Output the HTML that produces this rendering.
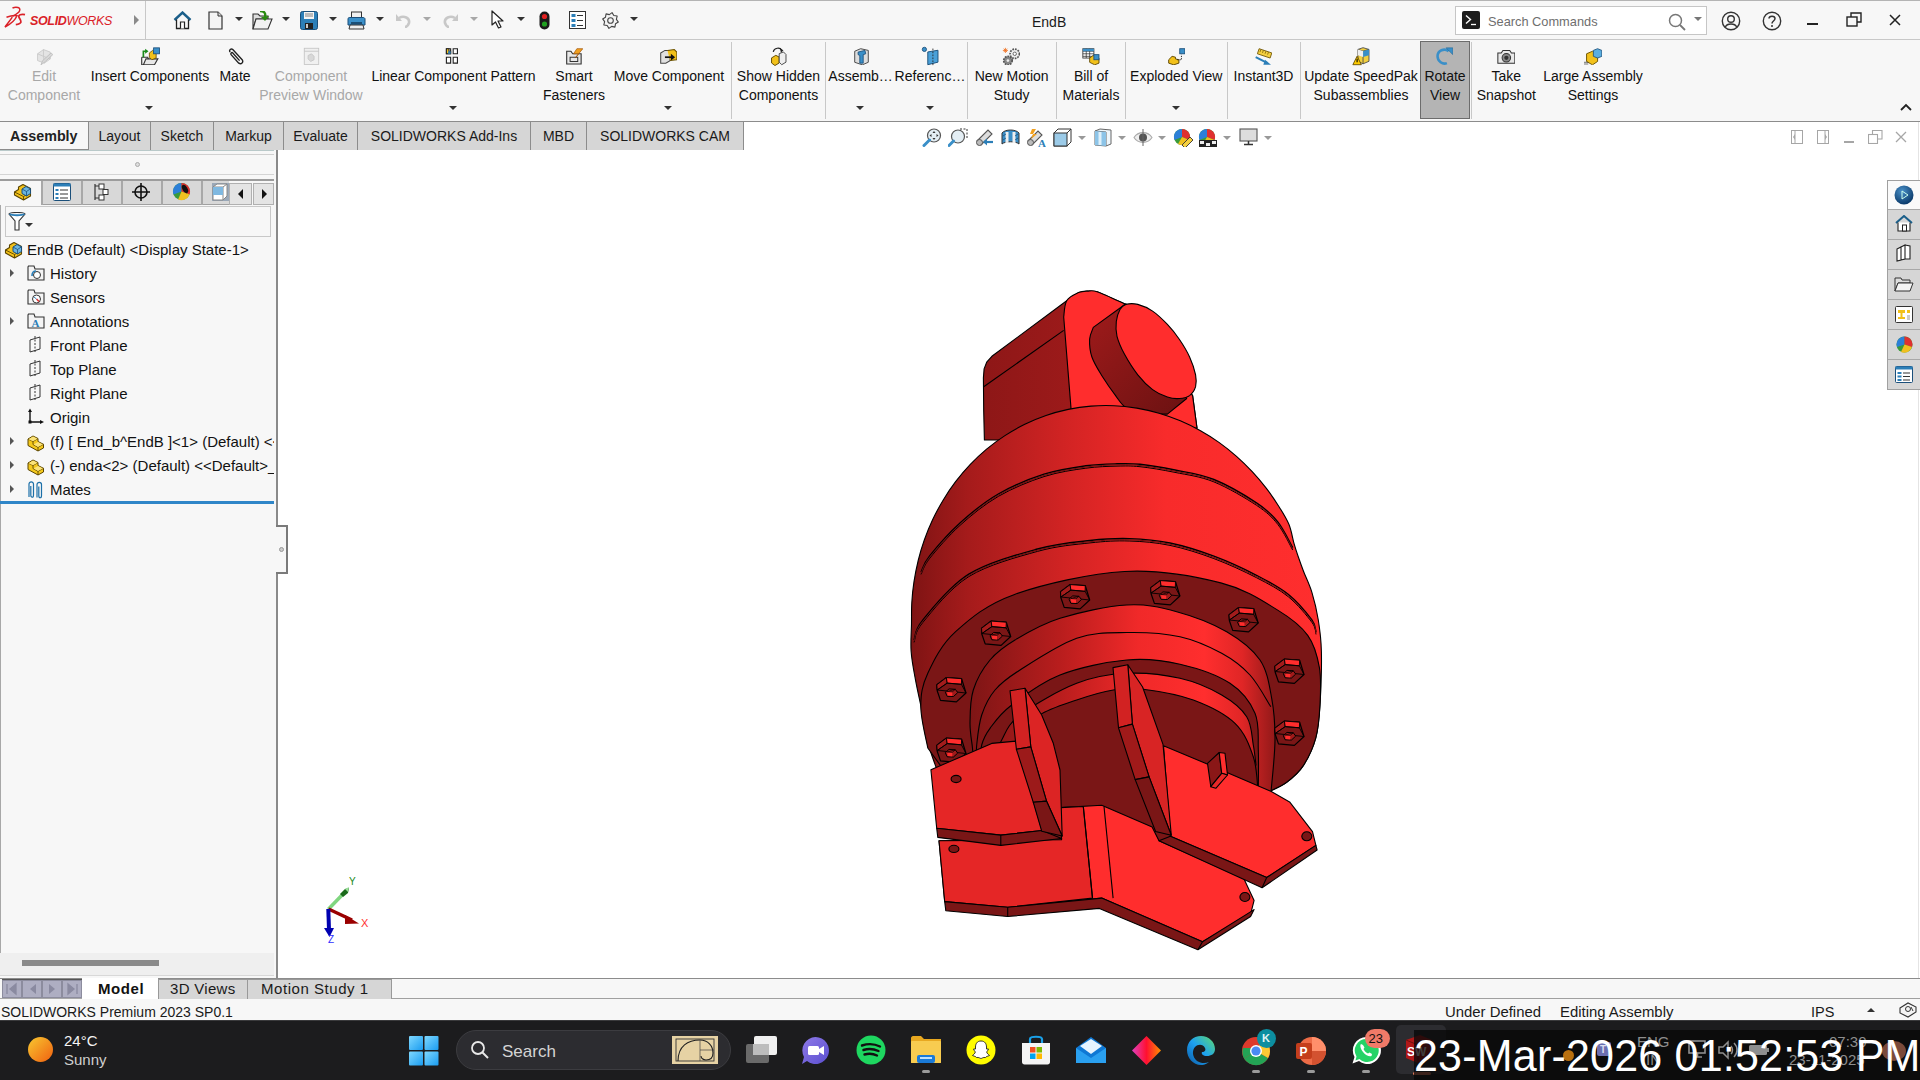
<!DOCTYPE html>
<html><head><meta charset="utf-8">
<style>
*{box-sizing:border-box;margin:0;padding:0}
html,body{width:1920px;height:1080px;overflow:hidden;background:#fff;font-family:"Liberation Sans",sans-serif;font-size:14px;color:#1a1a1a}
.a{position:absolute}
.t{position:absolute;white-space:nowrap;line-height:1}
#title{left:0;top:0;width:1920px;height:40px;background:#f7f7f7;border-top:1px solid #b4b4b4;border-bottom:1px solid #c8c8c8}
#ribbon{left:0;top:40px;width:1920px;height:82px;background:#f7f7f7;border-bottom:1px solid #8c8c8c}
#tabrow{left:0;top:122px;width:744px;height:28px;background:#f7f7f7}
#left{left:0;top:150px;width:278px;height:828px;background:#f7f7f7;border-right:2px solid #8a8a8a;overflow:hidden}
#btabs{left:0;top:978px;width:1920px;height:21px;background:#f7f7f7;border-top:1px solid #8c8c8c;border-bottom:1px solid #a8a8a8}
#status{left:0;top:999px;width:1920px;height:21px;background:#f7f7f7}
#taskbar{left:0;top:1020px;width:1920px;height:60px;background:#1c1c1e}
.rl{position:absolute;text-align:center;line-height:19px;white-space:nowrap;font-size:14px;color:#111}
.gr{color:#a8a8a8}
.sep{position:absolute;top:42px;width:1px;height:77px;background:#c8c8c8}
.dd{position:absolute;width:0;height:0;border-left:4px solid transparent;border-right:4px solid transparent;border-top:4px solid #333}
.tab{position:absolute;top:121px;height:29px;background:#d6d6d6;border:1px solid #8c8c8c;border-bottom:none;font-size:14px;line-height:28px;text-align:center;color:#1a1a1a}
.tree{position:absolute;left:50px;font-size:14px;line-height:1;white-space:nowrap;color:#111}
.exp{position:absolute;width:0;height:0;border-top:4px solid transparent;border-bottom:4px solid transparent;border-left:4px solid #555}
</style></head><body>

<!-- TITLE BAR -->
<div id="title" class="a"></div>
<div class="a" style="left:145px;top:1px;width:1px;height:38px;background:#c8c8c8"></div>
<div class="t" style="left:1032px;top:15px;font-size:14px">EndB</div>
<svg class="a" style="left:0px;top:0px" width="30" height="30" viewBox="0 0 30 30"><path d="M12.5,8 C16,6.3 21,7.3 19.6,10.8 C18.6,13.3 15.5,14.8 12.5,16.3" fill="none" stroke="#da2128" stroke-width="1.5"/><path d="M6.5,17.3 C10.5,15.8 14.5,15.4 17,15.8 C15,20.5 10,24.5 5,27 C8,23 10.5,20 12.3,17.2" fill="none" stroke="#da2128" stroke-width="1.5"/><path d="M25,14.6 C21.5,13.8 17.5,14.8 19.2,17.8 C20.8,20.5 23.5,23.5 15.8,24.6" fill="none" stroke="#da2128" stroke-width="1.8"/></svg>
<div class="t" style="left:30px;top:15px;font-size:12.5px;font-style:italic;color:#da2128;letter-spacing:-0.35px"><b>SOLID</b>WORKS</div>
<div class="a" style="left:134px;top:15px;width:0;height:0;border-top:5px solid transparent;border-bottom:5px solid transparent;border-left:5px solid #8a8a8a"></div>
<svg class="a" style="left:173px;top:11px" width="19" height="19" viewBox="0 0 19 19"><path d="M1.5,9 L9.5,1.5 L17.5,9" fill="none" stroke="#1b5f8a" stroke-width="2.4"/><path d="M3.5,8.5 L3.5,17.5 L15.5,17.5 L15.5,8.5" fill="none" stroke="#222" stroke-width="1.3"/><path d="M7.5,17.5 L7.5,11 L11.5,11 L11.5,17.5" fill="#fff" stroke="#222" stroke-width="1.2"/></svg>
<svg class="a" style="left:208px;top:11px" width="15" height="19" viewBox="0 0 15 19"><path d="M1,1 L10,1 L14,5 L14,18 L1,18Z" fill="#f4f4f4" stroke="#333" stroke-width="1.2"/><path d="M10,1 L10,5 L14,5" fill="#ddd" stroke="#333" stroke-width="1"/></svg>
<svg class="a" style="left:252px;top:11px" width="21" height="19" viewBox="0 0 21 19"><path d="M1,3 L6,3 L8,5 L16,5 L16,8 L4,8 L1,18Z" fill="#ddd" stroke="#333" stroke-width="1.1"/><path d="M1,18 L4,8 L20,8 L16,18Z" fill="#f2f2f2" stroke="#333" stroke-width="1.1"/><path d="M8,0 C12,0 14,2 13,6" fill="none" stroke="#2a8a10" stroke-width="2.4"/><path d="M9,6 L13,10 L17,5Z" fill="#2a8a10"/></svg>
<svg class="a" style="left:300px;top:11px" width="18" height="19" viewBox="0 0 18 19"><rect x="0.5" y="0.5" width="17" height="18" rx="2" fill="#2c7fb8" stroke="#1b4f7a"/><rect x="4" y="1" width="10" height="7" fill="#f4f4f4"/><path d="M5,3 L13,3 M5,5 L13,5" stroke="#666" stroke-width="0.8"/><rect x="5" y="12" width="8" height="6" fill="#222"/><rect x="6" y="13" width="2" height="4" fill="#ccc"/></svg>
<svg class="a" style="left:347px;top:11px" width="19" height="19" viewBox="0 0 19 19"><rect x="4.5" y="1" width="10" height="6" fill="#f0f0f0" stroke="#333"/><path d="M1,8 C1,6.5 2,6.5 3,6.5 L16,6.5 C17,6.5 18,7 18,8 L18,14 L1,14Z" fill="#3a8fc8" stroke="#1b4f7a"/><path d="M4,12 L15,12" stroke="#12395a" stroke-width="1.5"/><path d="M3,14 L16,14 L17,18 L2,18Z" fill="#eee" stroke="#333"/></svg>
<svg class="a" style="left:395px;top:12px" width="17" height="16" viewBox="0 0 17 16"><path d="M4,6 C9,3 15,6 14,11 C13,14 11,15 10,15" fill="none" stroke="#c8c8c8" stroke-width="2.6"/><path d="M1,2 L1,9 L7,9Z" fill="#c8c8c8"/></svg>
<svg class="a" style="left:442px;top:12px" width="17" height="16" viewBox="0 0 17 16"><path d="M13,6 C8,3 2,6 3,11 C4,14 6,15 7,15" fill="none" stroke="#c8c8c8" stroke-width="2.6"/><path d="M16,2 L16,9 L10,9Z" fill="#c8c8c8"/></svg>
<svg class="a" style="left:491px;top:10px" width="13" height="19" viewBox="0 0 13 19"><path d="M1,1 L1,15 L4.5,12 L7.5,18 L10,17 L7,11 L12,11Z" fill="#fff" stroke="#222" stroke-width="1.2" stroke-linejoin="round"/></svg>
<svg class="a" style="left:539px;top:11px" width="11" height="19" viewBox="0 0 11 19"><rect x="0.5" y="0.5" width="10" height="18" rx="5" fill="#1a1a1a"/><circle cx="5.5" cy="5.5" r="2.6" fill="#e02020"/><circle cx="5.5" cy="13" r="2.6" fill="#20a020"/></svg>
<svg class="a" style="left:569px;top:11px" width="17" height="18" viewBox="0 0 17 18"><rect x="0.5" y="0.5" width="16" height="17" fill="#fff" stroke="#333"/><rect x="2.5" y="3" width="4" height="3" fill="#2c7fb8"/><rect x="2.5" y="8" width="4" height="3" fill="#2c7fb8"/><rect x="2.5" y="13" width="4" height="3" fill="#2c7fb8"/><path d="M8,4.5 L14,4.5 M8,9.5 L14,9.5 M8,14.5 L14,14.5" stroke="#333" stroke-width="1"/></svg>
<svg class="a" style="left:602px;top:12px" width="17" height="17" viewBox="0 0 17 17"><polygon points="16.35,10.06 13.49,11.83 12.94,15.15 9.67,14.38 6.94,16.35 5.17,13.49 1.85,12.94 2.62,9.67 0.65,6.94 3.51,5.17 4.06,1.85 7.33,2.62 10.06,0.65 11.83,3.51 15.15,4.06 14.38,7.33" fill="#f4f4f4" stroke="#444" stroke-width="1.1" stroke-linejoin="round"/><circle cx="8.5" cy="8.5" r="2.8" fill="#f4f4f4" stroke="#444" stroke-width="1.1"/></svg>
<div class="dd" style="left:234.5px;top:17px;border-top-color:#333"></div>
<div class="dd" style="left:281.5px;top:17px;border-top-color:#333"></div>
<div class="dd" style="left:328.5px;top:17px;border-top-color:#333"></div>
<div class="dd" style="left:375.5px;top:17px;border-top-color:#333"></div>
<div class="dd" style="left:516.5px;top:17px;border-top-color:#333"></div>
<div class="dd" style="left:629.5px;top:17px;border-top-color:#333"></div>
<div class="dd" style="left:422.5px;top:17px;border-top-color:#a8a8a8"></div>
<div class="dd" style="left:469.5px;top:17px;border-top-color:#a8a8a8"></div>
<div class="a" style="left:1455px;top:6px;width:252px;height:29px;background:#fff;border:1px solid #c6c6c6"></div>
<svg class="a" style="left:1462px;top:11px" width="18" height="18" viewBox="0 0 18 18"><rect x="0" y="0" width="18" height="18" rx="2" fill="#1e1e1e"/><path d="M4,4.5 L8.5,8.5 L4,12.5" fill="none" stroke="#fff" stroke-width="1.4"/><path d="M9,13.5 L14,13.5" stroke="#fff" stroke-width="1.3"/></svg>
<div class="t" style="left:1488px;top:16px;font-size:12.8px;color:#6e6e6e">Search Commands</div>
<svg class="a" style="left:1668px;top:13px" width="19" height="18" viewBox="0 0 19 18"><circle cx="7.5" cy="7.5" r="6" fill="none" stroke="#777" stroke-width="1.5"/><path d="M12,12 L17,17" stroke="#777" stroke-width="1.8"/></svg>
<div class="dd" style="left:1693.5px;top:17px;border-top-color:#777"></div>
<svg class="a" style="left:1721px;top:11px" width="20" height="20" viewBox="0 0 20 20"><circle cx="10" cy="10" r="8.7" fill="none" stroke="#333" stroke-width="1.4"/><circle cx="10" cy="8" r="3.3" fill="none" stroke="#333" stroke-width="1.4"/><path d="M4.3,16 C6,12 14,12 15.7,16" fill="none" stroke="#333" stroke-width="1.4"/></svg>
<svg class="a" style="left:1762px;top:11px" width="20" height="20" viewBox="0 0 20 20"><circle cx="10" cy="10" r="8.7" fill="none" stroke="#333" stroke-width="1.4"/><path d="M7,7.5 C7,4.5 13,4.5 13,7.5 C13,10 10,10 10,12.5" fill="none" stroke="#333" stroke-width="1.5"/><circle cx="10" cy="15" r="1" fill="#333"/></svg>
<div class="a" style="left:1807px;top:23px;width:11px;height:2px;background:#222"></div>
<svg class="a" style="left:1846px;top:12px" width="17" height="15" viewBox="0 0 17 15"><rect x="1" y="5" width="10" height="9" fill="none" stroke="#222" stroke-width="1.4"/><path d="M5,5 L5,1 L15,1 L15,10 L11,10" fill="none" stroke="#222" stroke-width="1.4"/></svg>
<svg class="a" style="left:1889px;top:14px" width="12" height="12" viewBox="0 0 12 12"><path d="M1,1 L11,11 M11,1 L1,11" stroke="#222" stroke-width="1.5"/></svg>

<!-- RIBBON -->
<div id="ribbon" class="a"></div>
<div class="a" style="left:1420px;top:41px;width:50px;height:78px;background:#b4b4b4;border:1px solid #6c6c6c"></div>
<div class="sep" style="left:731px"></div>
<div class="sep" style="left:825px"></div>
<div class="sep" style="left:967px"></div>
<div class="sep" style="left:1056px"></div>
<div class="sep" style="left:1125px"></div>
<div class="sep" style="left:1227px"></div>
<div class="sep" style="left:1300px"></div>
<div class="sep" style="left:1471px"></div>
<div class="rl gr" style="left:-56px;top:67px;width:200px">Edit<br>Component</div>
<div class="rl" style="left:50px;top:67px;width:200px">Insert Components</div>
<div class="rl" style="left:135px;top:67px;width:200px">Mate</div>
<div class="rl gr" style="left:211px;top:67px;width:200px">Component<br>Preview Window</div>
<div class="rl" style="left:353.5px;top:67px;width:200px">Linear Component Pattern</div>
<div class="rl" style="left:474px;top:67px;width:200px">Smart<br>Fasteners</div>
<div class="rl" style="left:569px;top:67px;width:200px">Move Component</div>
<div class="rl" style="left:678.5px;top:67px;width:200px">Show Hidden<br>Components</div>
<div class="rl" style="left:760.6px;top:67px;width:200px">Assemb…</div>
<div class="rl" style="left:830px;top:67px;width:200px">Referenc…</div>
<div class="rl" style="left:911.7px;top:67px;width:200px">New Motion<br>Study</div>
<div class="rl" style="left:991px;top:67px;width:200px">Bill of<br>Materials</div>
<div class="rl" style="left:1076.3px;top:67px;width:200px">Exploded View</div>
<div class="rl" style="left:1163.5px;top:67px;width:200px">Instant3D</div>
<div class="rl" style="left:1261px;top:67px;width:200px">Update SpeedPak<br>Subassemblies</div>
<div class="rl" style="left:1345px;top:67px;width:200px">Rotate<br>View</div>
<div class="rl" style="left:1406.3px;top:67px;width:200px">Take<br>Snapshot</div>
<div class="rl" style="left:1493px;top:67px;width:200px">Large Assembly<br>Settings</div>
<div class="dd" style="left:145px;top:106px;border-top-color:#333"></div>
<div class="dd" style="left:449px;top:106px;border-top-color:#333"></div>
<div class="dd" style="left:664px;top:106px;border-top-color:#333"></div>
<div class="dd" style="left:856px;top:106px;border-top-color:#333"></div>
<div class="dd" style="left:926px;top:106px;border-top-color:#333"></div>
<div class="dd" style="left:1172px;top:106px;border-top-color:#333"></div>
<svg class="a" style="left:1899px;top:103px" width="14" height="9" viewBox="0 0 14 9"><path d="M2,7 L7,2 L12,7" fill="none" stroke="#222" stroke-width="1.8"/></svg>
<svg class="a" style="left:34.65px;top:46.65px" width="18.7" height="18.7" viewBox="0 0 22 22"><path d="M3,8 L10,3 L18,6 L18,14 L11,19 L3,16Z" fill="#e4e4e4" stroke="#c8c8c8"/><path d="M10,3 L10,11 L18,14 M3,8 L10,11 L11,19" fill="none" stroke="#c8c8c8"/><path d="M7,21 L9,16 L19,7 L21,9 L11,18Z" fill="#d8d8d8" stroke="#bdbdbd"/></svg>
<svg class="a" style="left:139.8px;top:46.65px" width="20.4" height="18.7" viewBox="0 0 24 22"><path d="M2,12 L2,21 L17,21 L21,14 L7,14 L4,21" fill="#e8e8e8" stroke="#333" stroke-width="1.3"/><path d="M2,12 L9,12 L10,14" fill="none" stroke="#333" stroke-width="1.3"/><path d="M4,12 L4,5 L8,5" fill="none" stroke="#1a8a1a" stroke-width="2"/><path d="M6,2 L10,5 L6,8Z" fill="#1a8a1a"/><path d="M11,7 L15,4 L19,8 L19,13 L14,15 L11,12Z" fill="#f2c11a" stroke="#6b5200" stroke-width="1"/><rect x="16" y="1" width="7" height="7" fill="#3a8fc8" stroke="#1b4f7a"/></svg>
<svg class="a" style="left:225.65px;top:46.65px" width="18.7" height="18.7" viewBox="0 0 22 22"><path d="M5,6 C3,4 6,1 8,3 L19,15 C21,18 18,21 15,19 L6,9 C5,7 7,6 8,7 L16,16" fill="none" stroke="#222" stroke-width="1.6"/></svg>
<svg class="a" style="left:302.5px;top:46.65px" width="17.0" height="18.7" viewBox="0 0 20 22"><rect x="1.5" y="1.5" width="17" height="19" fill="#f0f0f0" stroke="#c4c4c4"/><path d="M1.5,5 L18.5,5" stroke="#c4c4c4"/><path d="M6,10 L10,8 L13,11 L13,15 L9,17 L6,14Z" fill="#d8d8d8" stroke="#c4c4c4"/></svg>
<svg class="a" style="left:442.65px;top:46.65px" width="18.7" height="18.7" viewBox="0 0 22 22"><path d="M4,2 L9,2 L9,8 L4,8Z M12,2 L17,2 L17,8 L12,8Z M4,12 L9,12 L9,19 L4,19Z M12,12 L17,12 L17,19 L12,19Z" fill="#fff" stroke="#222" stroke-width="1.3"/><path d="M4,2 L7,2 L7,5 L9,5 L9,8 L4,8Z" fill="#f0c020" stroke="#222" stroke-width="1.2"/><rect x="6" y="5" width="3" height="3" fill="#2c7fb8"/></svg>
<svg class="a" style="left:564.65px;top:46.65px" width="18.7" height="18.7" viewBox="0 0 22 22"><path d="M2,6 L2,20 L19,20 L19,8 L9,8 L7,5 L2,5Z" fill="#e8e8e8" stroke="#333" stroke-width="1.3"/><path d="M6,12 L15,12 L15,17 L6,17Z" fill="none" stroke="#333" stroke-width="1.2"/><path d="M14,2 L21,2 L12,13 L16,8 L10,8Z" fill="#f0a020" stroke="#a05000" stroke-width="0.8"/></svg>
<svg class="a" style="left:658.65px;top:46.65px" width="18.7" height="18.7" viewBox="0 0 22 22"><path d="M2,7 L7,4 L13,4 L13,16 L8,19 L2,19Z" fill="#e0e0e0" stroke="#444" stroke-width="1.2"/><path d="M10,4 L18,3 L21,6 L21,15 L13,16" fill="#f2c11a" stroke="#6b5200" stroke-width="1.2"/><path d="M7,12 L16,12" stroke="#111" stroke-width="2"/><path d="M14,8 L19,12 L14,16Z" fill="#111"/></svg>
<svg class="a" style="left:768.65px;top:45.8px" width="18.7" height="20.4" viewBox="0 0 22 24"><path d="M3,14 L8,11 L12,13 L12,20 L7,23 L3,20Z" fill="#f2c11a" stroke="#5b4500" stroke-width="1.1"/><path d="M12,9 L17,7 L20,10 L20,19 L15,22 L12,19Z" fill="#eee" stroke="#444" stroke-width="1.1"/><path d="M5,7 C6,2 13,1 15,5" fill="none" stroke="#222" stroke-width="1.4"/><path d="M13,3 L17,5 L14,8Z" fill="#222"/></svg>
<svg class="a" style="left:852.5px;top:46.65px" width="17.0" height="18.7" viewBox="0 0 20 22"><path d="M2,5 L9,2 L18,4 L18,18 L11,21 L2,18Z" fill="#ddd" stroke="#444" stroke-width="1.1"/><path d="M6,6 L14,4 L15,8 L12,9 L12,19 L8,19 L8,10 L6,9Z" fill="#3a8fc8" stroke="#1b4f7a" stroke-width="1"/></svg>
<svg class="a" style="left:920.65px;top:45.8px" width="18.7" height="20.4" viewBox="0 0 22 24"><circle cx="4" cy="4" r="2.5" fill="#3a8fc8" stroke="#1b4f7a"/><path d="M8,7 L20,5 L20,19 L8,22Z" fill="#4aa0d8" stroke="#1b4f7a" stroke-width="1.1"/><path d="M14,3 L14,23" stroke="#222" stroke-width="1" stroke-dasharray="2,1.5"/></svg>
<svg class="a" style="left:1001.65px;top:46.65px" width="18.7" height="18.7" viewBox="0 0 22 22"><circle cx="15" cy="8" r="5.5" fill="#eee" stroke="#555" stroke-width="2" stroke-dasharray="2,1.2"/><circle cx="15" cy="8" r="2" fill="#fff" stroke="#555"/><circle cx="7" cy="16" r="5" fill="#888" stroke="#555" stroke-width="2" stroke-dasharray="2,1.2"/><circle cx="7" cy="16" r="1.6" fill="#eee"/><path d="M4,1 L4,7 M1,4 L7,4 M2,2 L6,6 M6,2 L2,6" stroke="#f07020" stroke-width="1"/></svg>
<svg class="a" style="left:1081.65px;top:46.65px" width="18.7" height="18.7" viewBox="0 0 22 22"><rect x="1" y="2" width="13" height="11" fill="#fff" stroke="#333"/><path d="M1,5 L14,5 M1,8 L14,8 M1,11 L14,11 M5,2 L5,13 M9,2 L9,13" stroke="#333" stroke-width="0.9"/><rect x="1" y="2" width="13" height="3" fill="#3a8fc8"/><path d="M9,13 L13,10 L20,13 L20,19 L15,21 L9,18Z" fill="#f2c11a" stroke="#5b4500"/><rect x="14" y="9" width="6" height="6" fill="#3a8fc8" stroke="#1b4f7a"/></svg>
<svg class="a" style="left:1166.65px;top:46.65px" width="18.7" height="18.7" viewBox="0 0 22 22"><path d="M2,15 L6,11 L10,12 L10,14 L14,15 L14,19 L8,21 L2,19Z" fill="#f2c11a" stroke="#5b4500" stroke-width="1.1"/><rect x="15" y="2" width="6" height="6" fill="#3a8fc8" stroke="#1b4f7a"/><path d="M12,15 L17,15 L17,9" fill="none" stroke="#222" stroke-width="1.1" stroke-dasharray="1.5,1.2"/></svg>
<svg class="a" style="left:1253.65px;top:46.65px" width="18.7" height="18.7" viewBox="0 0 22 22"><path d="M6,2 L21,7 L19,13 L4,8Z" fill="#f5d040" stroke="#6b5200"/><path d="M8,3 L7,6 M11,4 L10,7 M14,5 L13,8 M17,6 L16,9" stroke="#6b5200" stroke-width="0.8"/><path d="M2,12 L16,19" stroke="#2c7fb8" stroke-width="2.4"/><path d="M13,15 L20,21 L11,21Z" fill="#2c7fb8"/></svg>
<svg class="a" style="left:1351.65px;top:45.8px" width="18.7" height="20.4" viewBox="0 0 22 24"><path d="M7,4 L13,2 L20,4 L20,18 L13,21 L7,18Z" fill="#f2d040" stroke="#444"/><path d="M7,4 L13,6 L20,4 M13,6 L13,21" fill="none" stroke="#444"/><path d="M13,6 L20,4 L20,11 L13,13Z" fill="#3a8fc8"/><path d="M7,4 L13,6 L13,13 L7,11Z" fill="#eee"/><path d="M1,22 L6,12 L11,22Z" fill="#ffcc00" stroke="#5b4500"/><path d="M6,15 L6,19" stroke="#000" stroke-width="1.3"/></svg>
<svg class="a" style="left:1434.65px;top:46.65px" width="18.7" height="18.7" viewBox="0 0 22 22"><path d="M16,5 C11,1 3,4 3,11 C3,17 9,21 14,19" fill="none" stroke="#3a8fc8" stroke-width="3"/><path d="M13,1 L21,1 L21,9Z" fill="#3a8fc8" stroke="#1b5f8a" stroke-width="0.6"/></svg>
<svg class="a" style="left:1496.65px;top:47.5px" width="18.7" height="17.0" viewBox="0 0 22 20"><path d="M1,6 L5,6 L7,3 L15,3 L17,6 L21,6 L21,18 L1,18Z" fill="#e8e8e8" stroke="#333" stroke-width="1.2"/><circle cx="11" cy="11.5" r="5" fill="#888" stroke="#333" stroke-width="1.2"/><circle cx="11" cy="11.5" r="2.5" fill="#333"/></svg>
<svg class="a" style="left:1583.65px;top:46.65px" width="18.7" height="18.7" viewBox="0 0 22 22"><path d="M3,8 L10,5 L16,8 L16,17 L10,21 L3,17Z" fill="#f2c11a" stroke="#6b5200" stroke-width="1.1"/><path d="M11,4 L16,2 L21,4 L21,11 L16,13 L11,11Z" fill="#5aaee0" stroke="#1b4f7a" stroke-width="1"/><path d="M0,18 L5,18 M0,20 L5,20" stroke="#333" stroke-width="0.8"/></svg>

<!-- TAB ROW -->
<div id="tabrow" class="a"></div>
<div class="a" style="left:0;top:149px;width:744px;height:1px;background:#8c8c8c"></div>
<div class="t" style="left:10px;top:129px;font-weight:bold;font-size:14.3px;color:#222">Assembly</div>
<div class="tab" style="left:88px;width:63px">Layout</div>
<div class="tab" style="left:150px;width:64px">Sketch</div>
<div class="tab" style="left:213px;width:71px">Markup</div>
<div class="tab" style="left:283px;width:75px">Evaluate</div>
<div class="tab" style="left:357px;width:174px">SOLIDWORKS Add-Ins</div>
<div class="tab" style="left:530px;width:57px">MBD</div>
<div class="tab" style="left:586px;width:158px">SOLIDWORKS CAM</div>

<svg class="a" style="left:922px;top:128px" width="20" height="19" viewBox="0 0 20 19"><circle cx="12" cy="7.5" r="6.5" fill="#e4eef4" stroke="#555" stroke-width="1.2"/><path d="M7.5,12 L2,17.5" stroke="#3a8fc8" stroke-width="3" stroke-linecap="round"/><path d="M12,3 L10.5,5 L13.5,5Z M12,12 L10.5,10 L13.5,10Z M7.5,7.5 L9.5,6 L9.5,9Z M16.5,7.5 L14.5,6 L14.5,9Z" fill="#333"/></svg>
<svg class="a" style="left:948px;top:128px" width="20" height="19" viewBox="0 0 20 19"><circle cx="10" cy="8.5" r="6.5" fill="#e4eef4" stroke="#555" stroke-width="1.2"/><path d="M5.5,13 L1,17.5" stroke="#3a8fc8" stroke-width="3" stroke-linecap="round"/><path d="M12,1 L19,1 L19,10" fill="none" stroke="#333" stroke-width="1" stroke-dasharray="2,1.5"/></svg>
<svg class="a" style="left:975px;top:128px" width="19" height="19" viewBox="0 0 19 19"><path d="M2,13 L13,2 L17,6 L6,17Z" fill="#ddd" stroke="#555" stroke-width="1.1"/><circle cx="4.5" cy="14.5" r="3" fill="#bbb" stroke="#555"/><path d="M9,14 L18,14" stroke="#2c7fb8" stroke-width="2.2"/><path d="M8,14 L12,10.5 L12,17.5Z" fill="#2c7fb8"/></svg>
<svg class="a" style="left:1001px;top:128px" width="19" height="19" viewBox="0 0 19 19"><path d="M1,5 C4,1 15,1 18,5 L18,16 C15,13 4,13 1,16Z" fill="#3a8fc8" stroke="#333" stroke-width="1"/><path d="M6,4 L6,15 M13,4 L13,15" stroke="#eee" stroke-width="3"/><path d="M2,8 L5,6 M2,12 L5,10 M14,8 L17,6 M14,12 L17,10" stroke="#1b4f7a" stroke-width="0.8"/></svg>
<svg class="a" style="left:1026px;top:128px" width="20" height="19" viewBox="0 0 20 19"><path d="M2,13 L12,3 L16,7 L6,17Z" fill="#ddd" stroke="#555" stroke-width="1.1"/><circle cx="4.5" cy="14.5" r="3" fill="#bbb" stroke="#555"/><path d="M6,1 L10,1 L7,6 L11,6 L5,11 L7,6 L4,6Z" fill="#f0a020"/><text x="12" y="18.5" font-family="Liberation Serif" font-size="11" fill="#2c7fb8" font-weight="bold">A</text></svg>
<svg class="a" style="left:1053px;top:128px" width="19" height="19" viewBox="0 0 19 19"><path d="M1,5 L5,1 L18,1 L18,14 L14,18 L1,18Z" fill="#fff" stroke="#333" stroke-width="1"/><rect x="1" y="5" width="13" height="13" fill="#9ccbe8" stroke="#333" stroke-width="1"/><path d="M14,5 L18,1" stroke="#333"/></svg>
<svg class="a" style="left:1094px;top:128px" width="18" height="19" viewBox="0 0 18 19"><path d="M1,3 L6,1 L17,2 L17,16 L12,18 L1,17Z" fill="#eef6fb" stroke="#666" stroke-width="1"/><path d="M1,3 L12,4 L12,18" fill="none" stroke="#666"/><path d="M1,3 L12,4 L12,18 L1,17Z" fill="#8cc4e8"/><path d="M6,4 L6,17" stroke="#dff0fa" stroke-width="3"/></svg>
<svg class="a" style="left:1133px;top:128px" width="20" height="19" viewBox="0 0 20 19"><path d="M1,9.5 C5,3 15,3 19,9.5 C15,16 5,16 1,9.5Z" fill="#eee" stroke="#aaa" stroke-width="1.1"/><circle cx="10" cy="9.5" r="4" fill="#555"/><path d="M10,1 L10,18" stroke="#666" stroke-width="1"/></svg>
<svg class="a" style="left:1173px;top:128px" width="20" height="19" viewBox="0 0 20 19"><circle cx="9" cy="9" r="8" fill="#3a9a3a"/><path d="M9,9 L9,1 A8,8 0 0,0 1.5,12Z" fill="#2c7fd8"/><path d="M9,9 L9,1 A8,8 0 0,1 16.5,12Z" fill="#e03030"/><path d="M9,9 L16.5,12 A8,8 0 0,1 5,16Z" fill="#f0c020"/><path d="M9,17 L17,9 L20,12 L12,20Z" fill="#f5d040" stroke="#333" stroke-width="0.9"/></svg>
<svg class="a" style="left:1198px;top:128px" width="20" height="20" viewBox="0 0 20 20"><circle cx="9" cy="9" r="8" fill="#3a9a3a"/><path d="M9,9 L9,1 A8,8 0 0,0 1.5,12Z" fill="#2c7fd8"/><path d="M9,9 L9,1 A8,8 0 0,1 16.5,12Z" fill="#e03030"/><path d="M9,9 L16.5,12 A8,8 0 0,1 5,16Z" fill="#f0c020"/><rect x="1" y="12" width="18" height="7" fill="#222"/><path d="M2,13 L6,13 L6,16 L2,16Z M8,15 L12,15 L12,18 L8,18Z M14,13 L18,13 L18,16 L14,16Z" fill="#eee"/></svg>
<svg class="a" style="left:1239px;top:128px" width="19" height="18" viewBox="0 0 19 18"><rect x="1" y="1" width="17" height="12" fill="#ddd" stroke="#555" stroke-width="1.1"/><path d="M9.5,13 L9.5,16 M5,16.5 L14,16.5" stroke="#333" stroke-width="1.5"/></svg>
<div class="dd" style="left:1077.5px;top:136px;border-top-color:#999"></div>
<div class="dd" style="left:1117.5px;top:136px;border-top-color:#999"></div>
<div class="dd" style="left:1157.5px;top:136px;border-top-color:#999"></div>
<div class="dd" style="left:1223px;top:136px;border-top-color:#999"></div>
<div class="dd" style="left:1264px;top:136px;border-top-color:#999"></div>
<svg class="a" style="left:1791px;top:130px" width="13" height="15" viewBox="0 0 13 15"><rect x="0.5" y="0.5" width="11" height="13" fill="none" stroke="#a6a6a6"/><path d="M4,4 L4,10 L2,7Z" fill="#a6a6a6"/><path d="M4,0.5 L4,13.5" stroke="#a6a6a6"/></svg>
<svg class="a" style="left:1817px;top:130px" width="13" height="15" viewBox="0 0 13 15"><rect x="0.5" y="0.5" width="11" height="13" fill="none" stroke="#a6a6a6"/><path d="M8,4 L8,10 L10,7Z" fill="#a6a6a6"/><path d="M8,0.5 L8,13.5" stroke="#a6a6a6"/></svg>
<div class="a" style="left:1844px;top:141px;width:10px;height:2px;background:#a6a6a6"></div>
<svg class="a" style="left:1868px;top:130px" width="15" height="14" viewBox="0 0 15 14"><rect x="0.5" y="4.5" width="9" height="9" fill="none" stroke="#a6a6a6" stroke-width="1.1"/><path d="M4.5,4.5 L4.5,0.5 L14,0.5 L14,9 L9.5,9" fill="none" stroke="#a6a6a6" stroke-width="1.1"/></svg>
<svg class="a" style="left:1895px;top:131px" width="12" height="12" viewBox="0 0 12 12"><path d="M1,1 L11,11 M11,1 L1,11" stroke="#a6a6a6" stroke-width="1.3"/></svg>
<!-- LEFT PANEL -->
<div id="left" class="a"></div>
<div class="a" style="left:0;top:150px;width:274px;height:1px;background:#b9c9c9"></div>
<div class="a" style="left:0;top:205px;width:1px;height:770px;background:#a8a8a8"></div>
<div class="a" style="left:0;top:154px;width:274px;height:1px;background:#d0d0d0"></div>
<div class="a" style="left:134.5px;top:161.5px;width:5px;height:5px;border-radius:50%;background:#ddd;border:1px solid #aaa"></div>
<div class="a" style="left:0;top:174px;width:274px;height:1px;background:#d4d4d4"></div>
<div class="a" style="left:0;top:179px;width:274px;height:2px;background:#9c9c9c"></div>
<div class="a" style="left:41px;top:181px;width:188px;height:24px;background:#d8d8d8;border-bottom:1px solid #a0a0a0"></div>
<div class="a" style="left:41px;top:181px;width:2px;height:24px;background:#a8a8a8"></div>
<div class="a" style="left:81px;top:181px;width:2px;height:24px;background:#a8a8a8"></div>
<div class="a" style="left:121px;top:181px;width:2px;height:24px;background:#a8a8a8"></div>
<div class="a" style="left:161px;top:181px;width:2px;height:24px;background:#a8a8a8"></div>
<div class="a" style="left:201px;top:181px;width:2px;height:24px;background:#a8a8a8"></div>
<div class="a" style="left:229px;top:183px;width:23px;height:22px;background:#e4e4e4;border:1px solid #b0b0b0"></div>
<div class="a" style="left:253px;top:183px;width:21px;height:22px;background:#e4e4e4;border:1px solid #b0b0b0"></div>
<div class="a" style="left:238px;top:189px;width:0;height:0;border-top:5px solid transparent;border-bottom:5px solid transparent;border-right:5px solid #111"></div>
<div class="a" style="left:262px;top:189px;width:0;height:0;border-top:5px solid transparent;border-bottom:5px solid transparent;border-left:5px solid #111"></div>
<svg class="a" style="left:13px;top:182px" width="20" height="20" viewBox="0 0 20 20"><path d="M1.5,10 L5.5,7.5 L5.5,5 L10,2.5 L17.5,6.5 L17.5,14 L10.5,18 L1.5,13Z" fill="#f2c11a" stroke="#5b4500" stroke-width="1.1" stroke-linejoin="round"/><path d="M1.5,10 L10.5,14.5 L10.5,18 M10.5,14.5 L17.5,10.5" fill="none" stroke="#5b4500" stroke-width="0.9"/><path d="M9,7 L13,4.5 L17.5,6.8 L17.5,11.5 L13.5,14 L9,11.5Z" fill="#6ab4e0" stroke="#1b4f7a" stroke-width="1"/><path d="M9,7 L13.5,9.5 L17.5,6.8 M13.5,9.5 L13.5,14" fill="none" stroke="#1b4f7a" stroke-width="0.8"/></svg>
<svg class="a" style="left:53px;top:183px" width="18" height="18" viewBox="0 0 18 18"><rect x="0.5" y="0.5" width="17" height="17" rx="1" fill="#fff" stroke="#1b4f7a"/><rect x="0.5" y="0.5" width="17" height="3" fill="#2c7fb8"/><rect x="2.5" y="6" width="3" height="2" fill="#2c7fb8"/><rect x="2.5" y="10" width="3" height="2" fill="#2c7fb8"/><rect x="2.5" y="14" width="3" height="2" fill="#2c7fb8"/><path d="M7,7 L15,7 M7,11 L15,11 M7,15 L15,15" stroke="#333"/></svg>
<svg class="a" style="left:94px;top:183px" width="15" height="18" viewBox="0 0 15 18"><path d="M1,1 L1,17 M1,3 L5,3 M1,15 L5,15" fill="none" stroke="#333" stroke-width="1.2"/><rect x="5" y="1" width="5" height="5" fill="#fff" stroke="#333"/><rect x="9" y="6.5" width="5" height="5" fill="#fff" stroke="#333"/><rect x="5" y="12" width="5" height="5" fill="#fff" stroke="#333"/></svg>
<svg class="a" style="left:132px;top:183px" width="18" height="18" viewBox="0 0 18 18"><circle cx="9" cy="9" r="6" fill="none" stroke="#111" stroke-width="1.6"/><path d="M9,0 L9,18 M0,9 L18,9" stroke="#111" stroke-width="1.6"/></svg>
<svg class="a" style="left:172px;top:182px" width="19" height="19" viewBox="0 0 19 19"><circle cx="9.5" cy="9.5" r="8.5" fill="#3a9a3a"/><path d="M9.5,9.5 L9.5,1 A8.5,8.5 0 0,0 1.5,12.5Z" fill="#2c7fd8"/><path d="M9.5,9.5 L9.5,1 A8.5,8.5 0 0,1 17.5,12.5Z" fill="#e03030"/><path d="M9.5,9.5 L17.5,12.5 A8.5,8.5 0 0,1 6,17.5Z" fill="#f0c020"/><ellipse cx="13" cy="7" rx="2.5" ry="4.5" fill="#111" transform="rotate(-30 13 7)"/></svg>
<svg class="a" style="left:212px;top:183px" width="17" height="18" viewBox="0 0 17 18"><rect x="0" y="0" width="17" height="18" fill="#9aa8b8"/><path d="M1,4 L5,1 L15,1 L15,13 L11,17 L1,17Z" fill="#fff" stroke="#888"/><path d="M1,4 L11,4 L11,17 M11,4 L15,1" fill="none" stroke="#888"/><rect x="1" y="4" width="10" height="8" fill="#7fb8e0"/></svg>
<div class="a" style="left:5px;top:206px;width:266px;height:31px;border:1px solid #c8c8c8;background:#f7f7f7"></div>
<svg class="a" style="left:8px;top:212px" width="22" height="20" viewBox="0 0 22 20"><path d="M1,2 C1,0 17,0 17,2 L11,9 L11,18 L7,18 L7,9Z" fill="#fff" stroke="#333" stroke-width="1.1"/><path d="M1.5,2 C4,3.5 14,3.5 16.5,2" fill="none" stroke="#2c7fb8" stroke-width="2"/></svg>
<div class="dd" style="left:25px;top:223px;border-top-color:#333"></div>
<div class="a" style="left:0;top:0;width:274px;height:1080px;overflow:hidden">
<svg class="a" style="left:4px;top:240px" width="20" height="20" viewBox="0 0 20 20"><path d="M1.5,10 L5.5,7.5 L5.5,5 L10,2.5 L17.5,6.5 L17.5,14 L10.5,18 L1.5,13Z" fill="#f2c11a" stroke="#5b4500" stroke-width="1.1" stroke-linejoin="round"/><path d="M1.5,10 L10.5,14.5 L10.5,18 M10.5,14.5 L17.5,10.5" fill="none" stroke="#5b4500" stroke-width="0.9"/><path d="M9,7 L13,4.5 L17.5,6.8 L17.5,11.5 L13.5,14 L9,11.5Z" fill="#6ab4e0" stroke="#1b4f7a" stroke-width="1"/><path d="M9,7 L13.5,9.5 L17.5,6.8 M13.5,9.5 L13.5,14" fill="none" stroke="#1b4f7a" stroke-width="0.8"/></svg>
<div class="tree" style="left:27px;top:242px;font-size:15px">EndB (Default) &lt;Display State-1&gt;</div>
<div class="exp" style="left:10px;top:269px"></div>
<svg class="a" style="left:27px;top:264px" width="18" height="17" viewBox="0 0 18 17"><path d="M1,3 L1,16 L17,16 L17,5 L8,5 L7,2 L1.5,2Z" fill="#f4f4f4" stroke="#333" stroke-width="1.1"/><circle cx="10" cy="11" r="3.5" fill="#fff" stroke="#333"/><path d="M5,12 C5,8 7,7 9,7" fill="none" stroke="#2c7fb8" stroke-width="1.6"/></svg>
<div class="tree" style="left:50px;top:266px;font-size:15px">History</div>
<svg class="a" style="left:27px;top:288px" width="18" height="17" viewBox="0 0 18 17"><path d="M1,3 L1,16 L17,16 L17,5 L8,5 L7,2 L1.5,2Z" fill="#f4f4f4" stroke="#333" stroke-width="1.1"/><circle cx="9.5" cy="11" r="4" fill="#fff" stroke="#333"/><path d="M9.5,11 L12,13.5" stroke="#e03030" stroke-width="1.6"/><path d="M7,9 L9.5,11" stroke="#2c7fb8" stroke-width="1"/></svg>
<div class="tree" style="left:50px;top:290px;font-size:15px">Sensors</div>
<div class="exp" style="left:10px;top:317px"></div>
<svg class="a" style="left:27px;top:312px" width="18" height="17" viewBox="0 0 18 17"><path d="M1,3 L1,16 L17,16 L17,5 L8,5 L7,2 L1.5,2Z" fill="#f4f4f4" stroke="#333" stroke-width="1.1"/><text x="4.5" y="15" font-family="Liberation Serif" font-weight="bold" font-size="11" fill="#2c7fb8">A</text></svg>
<div class="tree" style="left:50px;top:314px;font-size:15px">Annotations</div>
<svg class="a" style="left:28px;top:336px" width="16" height="17" viewBox="0 0 16 17"><path d="M2,4 L12,1 L12,13 L2,16Z" fill="none" stroke="#333" stroke-width="1"/><path d="M7,0 L7,17" stroke="#333" stroke-width="1" stroke-dasharray="2,1.5"/></svg>
<div class="tree" style="left:50px;top:338px;font-size:15px">Front Plane</div>
<svg class="a" style="left:28px;top:360px" width="16" height="17" viewBox="0 0 16 17"><path d="M2,4 L12,1 L12,13 L2,16Z" fill="none" stroke="#333" stroke-width="1"/><path d="M7,0 L7,17" stroke="#333" stroke-width="1" stroke-dasharray="2,1.5"/></svg>
<div class="tree" style="left:50px;top:362px;font-size:15px">Top Plane</div>
<svg class="a" style="left:28px;top:384px" width="16" height="17" viewBox="0 0 16 17"><path d="M2,4 L12,1 L12,13 L2,16Z" fill="none" stroke="#333" stroke-width="1"/><path d="M7,0 L7,17" stroke="#333" stroke-width="1" stroke-dasharray="2,1.5"/></svg>
<div class="tree" style="left:50px;top:386px;font-size:15px">Right Plane</div>
<svg class="a" style="left:27px;top:408px" width="18" height="17" viewBox="0 0 18 17"><path d="M3,2 L3,14 L15,14" fill="none" stroke="#111" stroke-width="1.4"/><path d="M1,4 L3,0.5 L5,4Z M13,12 L17,14 L13,16Z" fill="#111"/><rect x="1.5" y="12.5" width="3" height="3" fill="#111"/></svg>
<div class="tree" style="left:50px;top:410px;font-size:15px">Origin</div>
<div class="exp" style="left:10px;top:437px"></div>
<svg class="a" style="left:27px;top:432px" width="18" height="20" viewBox="0 0 18 20"><path d="M1,7 L6,4 L11,6.5 L11,9.5 L16.5,12.3 L16.5,16 L11,19 L1,13.5Z" fill="#f4c81c" stroke="#5b4500" stroke-width="1" stroke-linejoin="round"/><path d="M1,7 L6,9.5 L11,6.5 M6,9.5 L6,12.5 L11,15.3 L16.5,12.3 M11,15.3 L11,19" fill="none" stroke="#5b4500" stroke-width="0.9"/><path d="M1.5,7.3 L6,4.6 L10.5,6.8 L6,9.2Z M6.5,12.5 L11,10 L16,12.4 L11,15Z" fill="#fbe37a"/></svg>
<div class="tree" style="left:50px;top:434px;font-size:15px">(f) [ End_b^EndB ]&lt;1&gt; (Default) &lt;&lt;Default&gt;_Display State 1&gt;</div>
<div class="exp" style="left:10px;top:461px"></div>
<svg class="a" style="left:27px;top:456px" width="18" height="20" viewBox="0 0 18 20"><path d="M1,7 L6,4 L11,6.5 L11,9.5 L16.5,12.3 L16.5,16 L11,19 L1,13.5Z" fill="#f4c81c" stroke="#5b4500" stroke-width="1" stroke-linejoin="round"/><path d="M1,7 L6,9.5 L11,6.5 M6,9.5 L6,12.5 L11,15.3 L16.5,12.3 M11,15.3 L11,19" fill="none" stroke="#5b4500" stroke-width="0.9"/><path d="M1.5,7.3 L6,4.6 L10.5,6.8 L6,9.2Z M6.5,12.5 L11,10 L16,12.4 L11,15Z" fill="#fbe37a"/></svg>
<div class="tree" style="left:50px;top:458px;font-size:15px">(-) enda&lt;2&gt; (Default) &lt;&lt;Default&gt;_Display State 1&gt;</div>
<div class="exp" style="left:10px;top:485px"></div>
<svg class="a" style="left:27px;top:480px" width="18" height="19" viewBox="0 0 18 19"><path d="M2,17 L2,4 C2,1.2 6.5,1.2 6.5,4 L6.5,15 C6.5,18 3.8,18 3.8,15 L3.8,6" fill="none" stroke="#1b6fa8" stroke-width="1.2"/><path d="M10,17.5 L10,4.5 C10,1.7 14.5,1.7 14.5,4.5 L14.5,15.5 C14.5,18.5 11.8,18.5 11.8,15.5 L11.8,6.5" fill="none" stroke="#1b6fa8" stroke-width="1.2"/></svg>
<div class="tree" style="left:50px;top:482px;font-size:15px">Mates</div>
</div>
<div class="a" style="left:0;top:501px;width:274px;height:3px;background:#2f86c8"></div>
<div class="a" style="left:274px;top:236px;width:2px;height:280px;background:#f7f7f7"></div>
<div class="a" style="left:0;top:953px;width:274px;height:22px;background:#efefef"></div>
<div class="a" style="left:22px;top:960px;width:137px;height:6px;background:#8a8a8a"></div>
<div class="a" style="left:0;top:975px;width:274px;height:1px;background:#d8d8d8"></div>
<div class="a" style="left:276px;top:525px;width:12px;height:49px;background:#f7f7f7;border:2px solid #7a7a7a;border-left:none"></div>
<div class="a" style="left:277px;top:527px;width:2px;height:45px;background:#f7f7f7"></div>
<div class="a" style="left:278.5px;top:546.5px;width:5px;height:5px;border-radius:50%;background:#ccc;border:1px solid #999"></div>

<!-- BOTTOM TABS -->
<div id="btabs" class="a"></div>
<div id="status" class="a"></div>
<div class="t" style="left:1px;top:1005px">SOLIDWORKS Premium 2023 SP0.1</div>
<div class="t" style="left:1445px;top:1004.5px;font-size:14.9px">Under Defined</div>
<div class="t" style="left:1560px;top:1004.5px;font-size:14.9px">Editing Assembly</div>
<div class="t" style="left:1811px;top:1004.5px;font-size:14.5px">IPS</div>

<div class="a" style="left:1918px;top:122px;width:1px;height:856px;background:#e4e4e4"></div>
<svg class="a" style="left:0;top:0" width="1920" height="1080" viewBox="0 0 1920 1080">
<defs>
<linearGradient id="gBody" x1="905" y1="0" x2="1325" y2="0" gradientUnits="userSpaceOnUse">
<stop offset="0" stop-color="#7a1313"/><stop offset="0.15" stop-color="#a51b1b"/><stop offset="0.4" stop-color="#d52424"/><stop offset="0.62" stop-color="#f82b2b"/><stop offset="1" stop-color="#ff2e2e"/></linearGradient>
<linearGradient id="gBand" x1="965" y1="0" x2="1280" y2="0" gradientUnits="userSpaceOnUse">
<stop offset="0" stop-color="#7a1515"/><stop offset="0.3" stop-color="#b81d1d"/><stop offset="0.55" stop-color="#f02929"/><stop offset="0.76" stop-color="#ff2e2e"/><stop offset="0.88" stop-color="#e02626"/><stop offset="1" stop-color="#861717"/></linearGradient>
<linearGradient id="gBlock" x1="985" y1="0" x2="1070" y2="0" gradientUnits="userSpaceOnUse">
<stop offset="0" stop-color="#8e1717"/><stop offset="1" stop-color="#9c1a1a"/></linearGradient>
<linearGradient id="gCyl" x1="1090" y1="320" x2="1180" y2="410" gradientUnits="userSpaceOnUse">
<stop offset="0" stop-color="#9c1a1a"/><stop offset="1" stop-color="#6e1212"/></linearGradient>
</defs>
<g stroke="#000" stroke-width="1.1" stroke-linejoin="round">
<path d="M984.4,440.0 L983.7,410.4 L983.4,377.8 L984.1,368.9 L986.7,362.2 L991.9,356.3 L1066.7,300.7 L1078.5,292.6 L1087.4,291.1 L1097.8,291.9 L1124.4,303.7 L1192.6,395.6 L1197.0,428.1 L1108.1,440.0Z" fill="url(#gBlock)"/>
<path d="M1063.7,317.0 C1064.2,314.3 1064.2,304.8 1066.7,300.7 C1069.1,296.7 1075.1,294.2 1078.5,292.6 C1082.0,291.0 1084.2,291.2 1087.4,291.1 C1090.6,291.0 1091.6,289.8 1097.8,291.9 C1104.0,294.0 1120.0,301.7 1124.4,303.7 L1192.6,395.6 L1197.0,428.1 L1072.6,428.1Z" fill="#ff2d2d"/>
<path d="M983.7,386.7 L1063.7,330.4" fill="none"/>
<path d="M1125.9,303.7 L1093.3,327.4 L1093.3,327.4 C1092.7,329.4 1089.9,334.3 1089.6,339.3 C1089.4,344.2 1089.8,350.9 1091.9,357.0 C1094.0,363.2 1098.3,369.9 1102.2,376.3 C1106.2,382.7 1111.6,390.4 1115.6,395.6 C1119.5,400.7 1121.0,404.4 1125.9,407.4 C1130.9,410.4 1138.3,412.2 1145.2,413.3 C1152.1,414.4 1163.7,414.0 1167.4,414.1 L1186.7,398.5Z" fill="url(#gCyl)"/>
<path d="M1125.9,304.4 C1128.9,303.6 1133.3,303.3 1137.8,304.4 C1142.2,305.6 1147.7,307.8 1152.6,311.1 C1157.5,314.4 1163.0,319.8 1167.4,324.4 C1171.9,329.1 1175.6,333.8 1179.3,339.3 C1183.0,344.7 1186.9,351.1 1189.6,357.0 C1192.3,363.0 1194.6,369.9 1195.6,374.8 C1196.5,379.8 1196.5,383.2 1195.6,386.7 C1194.6,390.1 1192.3,393.6 1189.6,395.6 C1186.9,397.5 1183.0,398.3 1179.3,398.5 C1175.6,398.8 1171.9,398.5 1167.4,397.0 C1163.0,395.6 1157.5,393.3 1152.6,389.6 C1147.7,385.9 1142.5,380.7 1137.8,374.8 C1133.1,368.9 1127.9,360.5 1124.4,354.1 C1121.0,347.7 1118.4,341.7 1117.0,336.3 C1115.7,330.9 1115.8,325.9 1116.3,321.5 C1116.8,317.0 1118.4,312.5 1120.0,309.6 C1121.6,306.8 1123.0,305.3 1125.9,304.4Z" fill="#ff2d2d"/>
<path d="M937.0,770.0 C935.3,765.0 929.5,749.6 927.0,740.0 C924.5,730.4 924.2,722.4 922.2,712.2 C920.2,702.0 917.1,689.1 915.3,678.9 C913.4,668.7 911.7,660.2 911.1,651.0 C910.5,641.8 911.4,631.9 911.5,623.9 C911.6,615.9 911.4,609.8 911.8,602.7 C912.2,595.7 912.9,588.6 914.0,581.6 C915.1,574.6 916.5,567.5 918.2,560.5 C919.9,553.5 922.0,546.6 924.4,539.8 C926.8,533.0 929.6,526.2 932.7,519.6 C935.8,513.0 939.3,506.5 943.1,500.2 C946.9,493.9 951.1,487.6 955.6,481.7 C960.1,475.8 964.9,470.0 970.1,464.6 C975.3,459.2 980.8,453.9 986.6,449.1 C992.4,444.3 998.5,439.7 1004.9,435.6 C1011.3,431.5 1017.9,427.7 1024.8,424.3 C1031.6,420.9 1038.8,418.0 1046.0,415.5 C1053.2,413.0 1060.7,411.0 1068.2,409.4 C1075.7,407.8 1083.4,406.7 1091.0,406.1 C1098.6,405.5 1106.4,405.4 1114.0,405.7 C1121.6,406.0 1129.3,406.9 1136.8,408.1 C1144.3,409.4 1151.8,411.1 1159.0,413.2 C1166.2,415.3 1173.4,417.9 1180.3,420.8 C1187.2,423.7 1194.0,427.1 1200.5,430.7 C1207.0,434.3 1213.3,438.3 1219.3,442.6 C1225.3,446.9 1231.0,451.5 1236.5,456.3 C1242.0,461.1 1247.2,466.3 1252.2,471.6 C1257.2,476.9 1261.8,482.4 1266.2,488.1 C1270.6,493.8 1274.6,499.7 1278.4,505.7 C1282.2,511.7 1286.3,518.0 1288.9,524.3 C1291.5,530.6 1292.5,538.1 1294.0,543.4 C1295.5,548.7 1296.4,551.4 1298.0,556.0 C1299.6,560.6 1301.1,564.9 1303.4,571.0 C1305.7,577.1 1309.4,584.2 1311.9,592.4 C1314.4,600.6 1316.7,610.1 1318.3,620.0 C1319.9,629.9 1321.1,637.6 1321.4,651.7 C1321.7,665.8 1320.9,690.0 1320.0,704.4 C1319.1,718.8 1318.6,727.6 1315.8,737.8 C1313.0,748.0 1308.1,758.2 1303.3,765.6 C1298.5,773.0 1292.6,777.8 1286.7,782.2 C1280.8,786.6 1271.1,790.4 1268.0,792.0 L1200,848 L1000,848Z" fill="url(#gBody)"/>
<path d="M921.0,572.0 C922.5,569.3 923.3,564.0 929.8,555.8 C936.3,547.6 948.6,533.3 960.0,523.0 C971.4,512.7 984.3,502.1 998.3,494.0 C1012.3,485.9 1029.4,478.9 1044.0,474.2 C1058.6,469.5 1073.6,467.5 1085.8,465.8 C1098.0,464.1 1108.0,464.0 1117.0,463.8 C1126.0,463.5 1130.3,463.3 1140.0,464.3 C1149.7,465.3 1162.7,467.5 1175.0,470.0 C1187.3,472.5 1200.3,474.0 1213.9,479.5 C1227.5,485.0 1245.8,495.8 1256.5,502.9 C1267.2,510.0 1271.8,514.5 1277.8,522.0 C1283.8,529.5 1290.2,543.3 1292.7,547.6" fill="none" stroke-width="1.4"/>
<path d="M921.0,574.4 C922.5,571.7 923.3,566.4 929.8,558.2 C936.3,550.0 948.6,535.7 960.0,525.4 C971.4,515.1 984.3,504.5 998.3,496.4 C1012.3,488.3 1029.4,481.3 1044.0,476.6 C1058.6,471.9 1073.6,469.9 1085.8,468.2 C1098.0,466.5 1108.0,466.4 1117.0,466.1 C1126.0,465.9 1130.3,465.7 1140.0,466.7 C1149.7,467.7 1162.7,469.9 1175.0,472.4 C1187.3,474.9 1200.3,476.4 1213.9,481.9 C1227.5,487.4 1245.8,498.2 1256.5,505.3 C1267.2,512.4 1271.8,516.9 1277.8,524.4 C1283.8,531.9 1290.2,545.7 1292.7,550.0" fill="none" stroke-width="1.0"/>
<path d="M921.0,573.2 C922.5,570.5 923.3,565.2 929.8,557.0 C936.3,548.8 948.6,534.5 960.0,524.2 C971.4,513.9 984.3,503.3 998.3,495.2 C1012.3,487.1 1029.4,480.1 1044.0,475.4 C1058.6,470.7 1073.6,468.7 1085.8,467.0 C1098.0,465.3 1108.0,465.2 1117.0,464.9 C1126.0,464.7 1130.3,464.5 1140.0,465.5 C1149.7,466.5 1162.7,468.7 1175.0,471.2 C1187.3,473.7 1200.3,475.2 1213.9,480.7 C1227.5,486.2 1245.8,497.0 1256.5,504.1 C1267.2,511.2 1271.8,515.8 1277.8,523.2 C1283.8,530.7 1290.2,544.5 1292.7,548.8" fill="none" stroke="#6a1010" stroke-width="1.0"/>
<path d="M914.0,640.0 C915.5,636.7 913.8,631.0 922.9,620.0 C932.0,609.0 949.7,586.0 968.8,574.2 C987.9,562.4 1017.3,554.6 1037.5,549.0 C1057.7,543.4 1074.7,542.2 1090.0,540.5 C1105.3,538.8 1115.9,538.2 1129.2,538.6 C1142.5,539.0 1155.9,540.1 1170.0,543.0 C1184.1,545.9 1199.5,550.8 1213.9,556.2 C1228.3,561.6 1244.1,568.9 1256.5,575.3 C1268.9,581.7 1279.3,587.0 1288.5,594.5 C1297.7,602.0 1307.3,613.8 1311.9,620.0 C1316.5,626.2 1315.3,630.0 1316.0,632.0" fill="none" stroke-width="1.4"/>
<path d="M914.0,642.4 C915.5,639.1 913.8,633.4 922.9,622.4 C932.0,611.4 949.7,588.4 968.8,576.6 C987.9,564.8 1017.3,557.0 1037.5,551.4 C1057.7,545.8 1074.7,544.6 1090.0,542.9 C1105.3,541.2 1115.9,540.6 1129.2,541.0 C1142.5,541.4 1155.9,542.5 1170.0,545.4 C1184.1,548.3 1199.5,553.2 1213.9,558.6 C1228.3,564.0 1244.1,571.3 1256.5,577.7 C1268.9,584.1 1279.3,589.4 1288.5,596.9 C1297.7,604.4 1307.3,616.1 1311.9,622.4 C1316.5,628.6 1315.3,632.4 1316.0,634.4" fill="none" stroke-width="1.0"/>
<path d="M914.0,641.2 C915.5,637.9 913.8,632.2 922.9,621.2 C932.0,610.2 949.7,587.2 968.8,575.4 C987.9,563.6 1017.3,555.8 1037.5,550.2 C1057.7,544.6 1074.7,543.4 1090.0,541.7 C1105.3,540.0 1115.9,539.4 1129.2,539.8 C1142.5,540.2 1155.9,541.3 1170.0,544.2 C1184.1,547.1 1199.5,552.0 1213.9,557.4 C1228.3,562.8 1244.1,570.1 1256.5,576.5 C1268.9,582.9 1279.3,588.2 1288.5,595.7 C1297.7,603.2 1307.3,615.0 1311.9,621.2 C1316.5,627.5 1315.3,631.2 1316.0,633.2" fill="none" stroke="#6a1010" stroke-width="1.0"/>
<path d="M927.8,748.0 C926.6,741.1 920.8,719.2 920.8,706.7 C920.8,694.2 922.0,685.8 927.8,673.3 C933.6,660.8 941.1,644.9 955.6,631.7 C970.1,618.6 986.4,604.4 1014.6,594.4 C1042.8,584.4 1090.2,573.4 1124.6,571.5 C1159.0,569.6 1195.2,576.4 1220.8,582.9 C1246.4,589.4 1263.6,601.6 1278.1,610.4 C1292.6,619.2 1301.0,626.0 1307.9,635.6 C1314.8,645.2 1317.4,656.2 1319.4,667.7 C1321.4,679.2 1320.6,692.7 1320.0,704.4 C1319.4,716.1 1318.6,727.6 1315.8,737.8 C1313.0,748.0 1308.1,758.2 1303.3,765.6 C1298.5,773.0 1292.6,777.8 1286.7,782.2 C1280.8,786.6 1271.1,790.4 1268.0,792.0 L1200,848 L1000,848Z" fill="#7a1616"/>
<path d="M973.0,760.0 C972.9,758.0 973.0,754.4 972.5,748.3 C972.0,742.2 969.9,733.0 970.0,723.3 C970.1,713.6 970.0,700.5 973.3,690.0 C976.6,679.5 983.0,668.3 990.0,660.0 C997.0,651.7 1003.3,647.0 1015.0,640.0 C1026.7,633.0 1041.4,624.1 1060.0,618.3 C1078.6,612.5 1107.2,606.1 1126.7,605.0 C1146.2,603.9 1160.0,607.2 1176.7,611.7 C1193.4,616.2 1212.8,623.7 1226.7,631.7 C1240.6,639.8 1252.5,648.9 1260.0,660.0 C1267.5,671.1 1269.2,685.0 1271.7,698.3 C1274.2,711.6 1275.1,724.4 1275.0,740.0 C1274.9,755.6 1271.7,783.3 1271.0,792.0 L1200,848 L1000,848Z" fill="url(#gBand)"/>
<path d="M977.0,760.0 C977.0,757.5 975.9,752.5 976.7,745.0 C977.5,737.5 978.7,724.2 981.7,715.0 C984.8,705.8 988.6,697.5 995.0,690.0 C1001.4,682.5 1006.4,678.6 1020.0,670.0 C1033.6,661.4 1058.9,644.5 1076.7,638.3 C1094.5,632.0 1109.5,632.8 1126.7,632.5 C1143.9,632.2 1164.2,633.2 1180.0,636.7 C1195.8,640.2 1210.0,646.9 1221.7,653.3 C1233.4,659.7 1241.8,666.1 1250.0,675.0 C1258.2,683.9 1267.3,701.4 1270.8,706.7" fill="none"/>
<path d="M981.7,760.0 C981.7,757.5 980.3,750.3 981.7,745.0 C983.1,739.7 985.0,735.0 990.0,728.3 C995.0,721.6 1000.0,713.9 1011.7,705.0 C1023.4,696.1 1040.8,682.5 1060.0,675.0 C1079.2,667.5 1106.7,661.8 1126.7,660.0 C1146.7,658.2 1162.8,660.3 1180.0,664.2 C1197.2,668.1 1217.5,675.1 1230.0,683.3 C1242.5,691.5 1250.3,702.2 1255.0,713.3 C1259.7,724.4 1257.8,737.2 1258.3,750.0 C1258.8,762.8 1258.3,783.3 1258.3,790.0 L1200,848 L1000,848Z" fill="#7a1616"/>
<path d="M995.0,760.0 C996.1,756.7 997.5,747.5 1001.7,740.0 C1005.9,732.5 1007.5,724.5 1020.0,715.0 C1032.5,705.5 1058.9,690.2 1076.7,683.3 C1094.5,676.3 1109.5,674.1 1126.7,673.3 C1143.9,672.5 1164.2,674.7 1180.0,678.3 C1195.8,681.9 1210.6,688.6 1221.7,695.0 C1232.8,701.4 1241.4,708.4 1246.7,716.7 C1252.0,725.0 1251.8,737.0 1253.3,745.0 C1254.8,753.0 1255.5,761.7 1256.0,765.0 L1200,848 L1000,848Z" fill="url(#gBand)"/>
<path d="M1030.0,735.0 C1031.7,731.7 1032.2,720.8 1040.0,715.0 C1047.8,709.2 1064.5,704.2 1076.7,700.0 C1088.9,695.8 1102.2,691.8 1113.3,690.0 C1124.4,688.2 1130.0,687.5 1143.3,689.2 C1156.6,690.9 1178.0,694.3 1193.3,700.0 C1208.6,705.7 1225.0,713.8 1235.0,723.3 C1245.0,732.8 1249.5,745.6 1253.3,756.7 C1257.1,767.8 1257.2,784.5 1258.0,790.0 L1200,848 L1000,848Z" fill="#7a1616"/>
<path d="M1060.5,591.8 L1070.1,584.6 L1085.3,585.7 L1089.7,600.0 L1080.1,608.9 L1064.2,607.4 L1060.9,597.7Z" fill="#7a1616" stroke-width="1.2"/>
<path d="M1060.5,591.8 L1070.1,584.6 L1070.9,590.1 L1060.9,597.0Z" fill="#a41c1c" stroke-width="0.9"/>
<path d="M1070.1,584.6 L1085.3,585.7 L1085.1,591.3 L1070.9,590.1Z" fill="#ff2d2d" stroke-width="0.9"/>
<path d="M1060.9,597.0 L1070.9,590.1 L1085.1,591.3 L1089.7,600.0Z" fill="none" stroke-width="0.9"/>
<path d="M1069.0,599.2 L1072.7,595.9 L1079.0,596.3 L1081.4,599.6 L1077.2,603.5 L1070.9,603.3Z" fill="#a01a1a" stroke-width="1"/>
<path d="M1070.9,598.5 L1076.0,598.9 L1076.0,602.9 L1071.2,602.6Z" fill="#ff2d2d" stroke="none"/>
<path d="M1070.9,598.5 L1076.0,598.9 L1079.0,596.3Z" fill="none" stroke-width="0.7"/>
<path d="M1150.7,587.8 L1160.3,580.6 L1175.5,581.7 L1179.9,596.0 L1170.3,604.9 L1154.4,603.4 L1151.1,593.7Z" fill="#7a1616" stroke-width="1.2"/>
<path d="M1150.7,587.8 L1160.3,580.6 L1161.1,586.1 L1151.1,593.0Z" fill="#a41c1c" stroke-width="0.9"/>
<path d="M1160.3,580.6 L1175.5,581.7 L1175.3,587.3 L1161.1,586.1Z" fill="#ff2d2d" stroke-width="0.9"/>
<path d="M1151.1,593.0 L1161.1,586.1 L1175.3,587.3 L1179.9,596.0Z" fill="none" stroke-width="0.9"/>
<path d="M1159.2,595.2 L1162.9,591.9 L1169.2,592.3 L1171.6,595.6 L1167.4,599.5 L1161.1,599.3Z" fill="#a01a1a" stroke-width="1"/>
<path d="M1161.1,594.5 L1166.2,594.9 L1166.2,598.9 L1161.4,598.6Z" fill="#ff2d2d" stroke="none"/>
<path d="M1161.1,594.5 L1166.2,594.9 L1169.2,592.3Z" fill="none" stroke-width="0.7"/>
<path d="M981.5,628.3 L991.1,621.1 L1006.3,622.2 L1010.7,636.5 L1001.1,645.4 L985.2,643.9 L981.9,634.2Z" fill="#7a1616" stroke-width="1.2"/>
<path d="M981.5,628.3 L991.1,621.1 L991.9,626.6 L981.9,633.5Z" fill="#a41c1c" stroke-width="0.9"/>
<path d="M991.1,621.1 L1006.3,622.2 L1006.1,627.8 L991.9,626.6Z" fill="#ff2d2d" stroke-width="0.9"/>
<path d="M981.9,633.5 L991.9,626.6 L1006.1,627.8 L1010.7,636.5Z" fill="none" stroke-width="0.9"/>
<path d="M990.0,635.7 L993.7,632.4 L1000.0,632.8 L1002.4,636.1 L998.2,640.0 L991.9,639.8Z" fill="#a01a1a" stroke-width="1"/>
<path d="M991.9,635.0 L997.0,635.4 L997.0,639.4 L992.2,639.1Z" fill="#ff2d2d" stroke="none"/>
<path d="M991.9,635.0 L997.0,635.4 L1000.0,632.8Z" fill="none" stroke-width="0.7"/>
<path d="M1229.0,614.8 L1238.6,607.6 L1253.8,608.7 L1258.2,623.0 L1248.6,631.9 L1232.7,630.4 L1229.4,620.7Z" fill="#7a1616" stroke-width="1.2"/>
<path d="M1229.0,614.8 L1238.6,607.6 L1239.4,613.1 L1229.4,620.0Z" fill="#a41c1c" stroke-width="0.9"/>
<path d="M1238.6,607.6 L1253.8,608.7 L1253.6,614.3 L1239.4,613.1Z" fill="#ff2d2d" stroke-width="0.9"/>
<path d="M1229.4,620.0 L1239.4,613.1 L1253.6,614.3 L1258.2,623.0Z" fill="none" stroke-width="0.9"/>
<path d="M1237.5,622.2 L1241.2,618.9 L1247.5,619.3 L1249.9,622.6 L1245.7,626.5 L1239.4,626.3Z" fill="#a01a1a" stroke-width="1"/>
<path d="M1239.4,621.5 L1244.5,621.9 L1244.5,625.9 L1239.7,625.6Z" fill="#ff2d2d" stroke="none"/>
<path d="M1239.4,621.5 L1244.5,621.9 L1247.5,619.3Z" fill="none" stroke-width="0.7"/>
<path d="M936.8,684.8 L946.4,677.6 L961.6,678.7 L966.0,693.0 L956.4,701.9 L940.5,700.4 L937.2,690.7Z" fill="#7a1616" stroke-width="1.2"/>
<path d="M936.8,684.8 L946.4,677.6 L947.2,683.1 L937.2,690.0Z" fill="#a41c1c" stroke-width="0.9"/>
<path d="M946.4,677.6 L961.6,678.7 L961.4,684.3 L947.2,683.1Z" fill="#ff2d2d" stroke-width="0.9"/>
<path d="M937.2,690.0 L947.2,683.1 L961.4,684.3 L966.0,693.0Z" fill="none" stroke-width="0.9"/>
<path d="M945.3,692.2 L949.0,688.9 L955.3,689.3 L957.7,692.6 L953.5,696.5 L947.2,696.3Z" fill="#a01a1a" stroke-width="1"/>
<path d="M947.2,691.5 L952.3,691.9 L952.3,695.9 L947.5,695.6Z" fill="#ff2d2d" stroke="none"/>
<path d="M947.2,691.5 L952.3,691.9 L955.3,689.3Z" fill="none" stroke-width="0.7"/>
<path d="M1274.8,666.3 L1284.4,659.1 L1299.6,660.2 L1304.0,674.5 L1294.4,683.4 L1278.5,681.9 L1275.2,672.2Z" fill="#7a1616" stroke-width="1.2"/>
<path d="M1274.8,666.3 L1284.4,659.1 L1285.2,664.6 L1275.2,671.5Z" fill="#a41c1c" stroke-width="0.9"/>
<path d="M1284.4,659.1 L1299.6,660.2 L1299.4,665.8 L1285.2,664.6Z" fill="#ff2d2d" stroke-width="0.9"/>
<path d="M1275.2,671.5 L1285.2,664.6 L1299.4,665.8 L1304.0,674.5Z" fill="none" stroke-width="0.9"/>
<path d="M1283.3,673.7 L1287.0,670.4 L1293.3,670.8 L1295.7,674.1 L1291.5,678.0 L1285.2,677.8Z" fill="#a01a1a" stroke-width="1"/>
<path d="M1285.2,673.0 L1290.3,673.4 L1290.3,677.4 L1285.5,677.1Z" fill="#ff2d2d" stroke="none"/>
<path d="M1285.2,673.0 L1290.3,673.4 L1293.3,670.8Z" fill="none" stroke-width="0.7"/>
<path d="M936.8,745.3 L946.4,738.1 L961.6,739.2 L966.0,753.5 L956.4,762.4 L940.5,760.9 L937.2,751.2Z" fill="#7a1616" stroke-width="1.2"/>
<path d="M936.8,745.3 L946.4,738.1 L947.2,743.6 L937.2,750.5Z" fill="#a41c1c" stroke-width="0.9"/>
<path d="M946.4,738.1 L961.6,739.2 L961.4,744.8 L947.2,743.6Z" fill="#ff2d2d" stroke-width="0.9"/>
<path d="M937.2,750.5 L947.2,743.6 L961.4,744.8 L966.0,753.5Z" fill="none" stroke-width="0.9"/>
<path d="M945.3,752.7 L949.0,749.4 L955.3,749.8 L957.7,753.1 L953.5,757.0 L947.2,756.8Z" fill="#a01a1a" stroke-width="1"/>
<path d="M947.2,752.0 L952.3,752.4 L952.3,756.4 L947.5,756.1Z" fill="#ff2d2d" stroke="none"/>
<path d="M947.2,752.0 L952.3,752.4 L955.3,749.8Z" fill="none" stroke-width="0.7"/>
<path d="M1274.8,728.3 L1284.4,721.1 L1299.6,722.2 L1304.0,736.5 L1294.4,745.4 L1278.5,743.9 L1275.2,734.2Z" fill="#7a1616" stroke-width="1.2"/>
<path d="M1274.8,728.3 L1284.4,721.1 L1285.2,726.6 L1275.2,733.5Z" fill="#a41c1c" stroke-width="0.9"/>
<path d="M1284.4,721.1 L1299.6,722.2 L1299.4,727.8 L1285.2,726.6Z" fill="#ff2d2d" stroke-width="0.9"/>
<path d="M1275.2,733.5 L1285.2,726.6 L1299.4,727.8 L1304.0,736.5Z" fill="none" stroke-width="0.9"/>
<path d="M1283.3,735.7 L1287.0,732.4 L1293.3,732.8 L1295.7,736.1 L1291.5,740.0 L1285.2,739.8Z" fill="#a01a1a" stroke-width="1"/>
<path d="M1285.2,735.0 L1290.3,735.4 L1290.3,739.4 L1285.5,739.1Z" fill="#ff2d2d" stroke="none"/>
<path d="M1285.2,735.0 L1290.3,735.4 L1293.3,732.8Z" fill="none" stroke-width="0.7"/>
<path d="M939.0,840.8 L1061.6,839.7 L1060.4,807.6 L1101.7,805.3 L1152.1,827.1 L1159.0,840.8 L1243.8,878.4 L1254.1,900.4 L1250.6,914.2 L1202.5,941.7 L1101.7,898.1 L1007.7,907.3 L944.7,901.6Z" fill="#ff2d2d"/>
<path d="M939.0,840.8 L1061.6,839.7 L1060.4,807.6 L1083.3,806.5 L1092.5,898.1 L1007.7,907.3 L944.7,901.6Z" fill="#e52626"/>
<path d="M1083.3,806.5 L1092.5,898.1" fill="none"/>
<path d="M1104.0,806.5 L1113.1,898.1" fill="none"/>
<path d="M944.7,901.6 L1007.7,907.3 L1101.7,898.1 L1202.5,941.7 L1254.1,909.6 L1250.6,916.5 L1197.9,949.7 L1099.4,908.4 L1007.7,916.5 L945.8,910.7Z" fill="#7a1616"/>
<path d="M1007.7,907.3 L1007.7,916.5" fill="none"/>
<path d="M1202.5,941.7 L1197.9,949.7" fill="none"/>
<path d="M1163.5,745.7 L1204.8,762.9 L1271.3,791.6 L1289.6,801.9 L1312.5,831.7 L1315.9,845.4 L1266.7,877.5 L1170.4,836.3Z" fill="#ff2d2d"/>
<path d="M1159.0,840.8 L1170.4,836.3 L1266.7,877.5 L1315.9,845.4 L1317.1,850.0 L1262.1,887.8Z" fill="#7a1616"/>
<path d="M1266.7,877.5 L1262.1,887.8" fill="none"/>
<path d="M1127.8,664.8 L1142.6,687.0 L1163.0,744.4 L1171.3,835.2 L1149.1,776.9 L1132.4,724.1Z" fill="#d82424"/>
<path d="M1113.0,667.6 L1127.8,664.8 L1132.4,724.1 L1118.5,727.8Z" fill="#d22222"/>
<path d="M1118.5,727.8 L1132.4,724.1 L1149.1,776.9 L1135.2,779.6Z" fill="#a01a1a"/>
<path d="M1135.2,779.6 L1149.1,776.9 L1171.3,835.2 L1155.6,831.5Z" fill="#7a1616"/>
<path d="M1207.5,763.3 L1219.2,752.5 L1221.7,773.3 L1210.8,786.7Z" fill="#8a1717"/>
<path d="M1219.2,752.5 L1225.0,753.3 L1227.5,775.0 L1221.7,773.3Z" fill="#ff2e2e"/>
<path d="M1210.8,786.7 L1221.7,773.3 L1227.5,775.0 L1215.8,788.3Z" fill="#e82828"/>
<path d="M930.9,769.8 L991.7,743.4 L1015.7,741.1 L1042.1,830.5 L1000.8,835.1 L936.7,828.2Z" fill="#e52626"/>
<path d="M936.7,828.2 L1000.8,835.1 L1042.1,830.5 L1061.6,838.5 L1000.8,845.4 L937.8,837.4Z" fill="#7a1616"/>
<path d="M1000.8,835.1 L1000.8,845.4" fill="none"/>
<path d="M1025.0,688.3 L1041.7,715.0 L1053.3,743.3 L1060.0,770.0 L1062.2,836.0 L1046.5,801.1 L1030.8,746.9Z" fill="#dc2424"/>
<path d="M1010.0,690.8 L1025.0,688.3 L1030.8,746.9 L1016.4,749.3Z" fill="#d22222"/>
<path d="M1016.4,749.3 L1030.8,746.9 L1046.5,801.1 L1033.3,802.3Z" fill="#9c1a1a"/>
<path d="M1033.3,802.3 L1046.5,801.1 L1062.2,836.0 L1041.7,831.2Z" fill="#7a1616"/>
<ellipse cx="956.1" cy="779" rx="5" ry="3.6" fill="#7a1616"/>
<ellipse cx="953.9" cy="848.9" rx="5" ry="3.6" fill="#7a1616"/>
<ellipse cx="1244.9" cy="897" rx="5" ry="4.5" fill="#7a1616"/>
<ellipse cx="1306.8" cy="836.3" rx="5" ry="4.5" fill="#7a1616"/>
</g></svg>
<!-- TASKBAR -->
<div id="taskbar" class="a"></div>
<div class="a" style="left:2px;top:979px;width:80px;height:19px;background:#a9a9be;border-top:2px solid #555"></div>
<div class="a" style="left:2px;top:980px;width:20px;height:18px;border:1px solid #8c8c9e;background:#aeaec2"></div>
<div class="a" style="left:22px;top:980px;width:20px;height:18px;border:1px solid #8c8c9e;background:#aeaec2"></div>
<div class="a" style="left:42px;top:980px;width:20px;height:18px;border:1px solid #8c8c9e;background:#aeaec2"></div>
<div class="a" style="left:62px;top:980px;width:20px;height:18px;border:1px solid #8c8c9e;background:#aeaec2"></div>
<svg class="a" style="left:2px;top:980px" width="80" height="18" viewBox="0 0 80 18"><path d="M5,4 L5,14 M14,4 L8,9 L14,14Z" fill="#8a8aa0" stroke="#8a8aa0" stroke-width="1.3"/><path d="M34,4 L28,9 L34,14Z" fill="#8a8aa0"/><path d="M47,4 L53,9 L47,14Z" fill="#8a8aa0"/><path d="M75,4 L75,14 M66,4 L72,9 L66,14Z" fill="#8a8aa0" stroke="#8a8aa0" stroke-width="1.3"/></svg>
<div class="a" style="left:82px;top:978px;width:76px;height:21px;background:#fff"></div>
<div class="t" style="left:98px;top:981px;font-size:15px;font-weight:bold;color:#111;letter-spacing:0.6px">Model</div>
<div class="a" style="left:158px;top:979px;width:90px;height:20px;background:#d6d6d6;border:1px solid #999;border-bottom:none"></div>
<div class="t" style="left:170px;top:981px;font-size:15px;letter-spacing:0.3px">3D Views</div>
<div class="a" style="left:247px;top:979px;width:145px;height:20px;background:#d6d6d6;border:1px solid #999;border-bottom:none"></div>
<div class="t" style="left:261px;top:981px;font-size:15px;letter-spacing:0.55px">Motion Study 1</div>
<div class="a" style="left:391px;top:979px;width:1px;height:20px;background:#999"></div>
<div class="a" style="left:392px;top:998px;width:1528px;height:1px;background:#a0a0a0"></div>
<div class="a" style="left:1867px;top:1008px;width:0;height:0;border-left:4px solid transparent;border-right:4px solid transparent;border-bottom:4px solid #333"></div>
<svg class="a" style="left:1899px;top:1002px" width="18" height="16" viewBox="0 0 18 16"><path d="M1,6 L9,1 L17,5 L17,10 L9,15 L1,11Z" fill="#f4f4f4" stroke="#333" stroke-width="1.1"/><circle cx="9" cy="7" r="2.5" fill="none" stroke="#333"/><path d="M12,5 L14,9" stroke="#333"/></svg>
<div class="a" style="left:0;top:1020px;width:1920px;height:1px;background:#3a3a3c"></div>
<div class="a" style="left:28px;top:1037px;width:25px;height:25px;border-radius:50%;background:linear-gradient(135deg,#f8c830,#f06010)"></div>
<div class="t" style="left:64px;top:1033px;font-size:15px;color:#f4f4f4">24°C</div>
<div class="t" style="left:64px;top:1052px;font-size:15px;color:#d0d0d0">Sunny</div>
<svg class="a" style="left:409px;top:1036px" width="30" height="30" viewBox="0 0 30 30"><defs><linearGradient id="wg" x1="0" y1="0" x2="1" y2="1"><stop offset="0" stop-color="#7fd8ff"/><stop offset="1" stop-color="#1a9cf0"/></linearGradient></defs><rect x="0" y="0" width="14" height="14" rx="1" fill="url(#wg)"/><rect x="15.5" y="0" width="14" height="14" rx="1" fill="url(#wg)"/><rect x="0" y="15.5" width="14" height="14" rx="1" fill="url(#wg)"/><rect x="15.5" y="15.5" width="14" height="14" rx="1" fill="url(#wg)"/></svg>
<div class="a" style="left:456px;top:1030px;width:275px;height:40px;border-radius:20px;background:#2c2c30;border:1px solid #3c3c40"></div>
<svg class="a" style="left:470px;top:1040px" width="20" height="20" viewBox="0 0 20 20"><circle cx="8" cy="8" r="6" fill="none" stroke="#e8e8e8" stroke-width="1.8"/><path d="M12.5,12.5 L18,18" stroke="#e8e8e8" stroke-width="2"/></svg>
<div class="t" style="left:502px;top:1043px;font-size:17px;color:#d4d4d4">Search</div>
<svg class="a" style="left:672px;top:1036px" width="46" height="28" viewBox="0 0 46 28"><rect x="0" y="0" width="46" height="28" fill="#e6d2a4"/><rect x="4" y="3" width="38" height="22" fill="none" stroke="#333" stroke-width="0.9"/><path d="M6,25 C6,10 16,4 28,4 C36,4 41,10 41,17 C41,22 38,24 34,24 C31,24 29,22 29,20" fill="none" stroke="#222" stroke-width="1.1"/><path d="M28,4 L28,25 M28,14 L42,14" stroke="#444" stroke-width="0.7"/></svg>
<svg class="a" style="left:746px;top:1036px" width="31" height="28" viewBox="0 0 31 28"><rect x="0" y="8" width="23" height="19" rx="2" fill="#6a6a6a"/><rect x="8" y="0" width="23" height="19" rx="2" fill="#f0f0f0"/><rect x="7" y="8" width="16" height="11" fill="#bdbdbd"/></svg>
<svg class="a" style="left:801px;top:1036px" width="29" height="29" viewBox="0 0 29 29"><defs><linearGradient id="zg" x1="0" y1="0" x2="1" y2="1"><stop offset="0" stop-color="#8f7ae8"/><stop offset="1" stop-color="#5b4fd0"/></linearGradient></defs><path d="M14.5,1 A13.5,13.5 0 1,1 6,25 L1,28 L3,21 A13.5,13.5 0 0,1 14.5,1Z" fill="url(#zg)"/><rect x="7" y="10" width="11" height="9" rx="1.5" fill="#fff"/><path d="M18,13 L23,10 L23,19 L18,16Z" fill="#fff"/></svg>
<svg class="a" style="left:856px;top:1035px" width="30" height="30" viewBox="0 0 30 30"><circle cx="15" cy="15" r="14.5" fill="#1ed760"/><path d="M6,10.5 C12,8.5 19,9 24,11.5 M7.5,15 C12,13.5 18,14 22.5,16 M8.5,19.5 C12,18.5 17,18.5 21,20.5" fill="none" stroke="#111" stroke-width="2.4" stroke-linecap="round"/></svg>
<svg class="a" style="left:911px;top:1036px" width="30" height="28" viewBox="0 0 30 28"><path d="M0,2 C0,1 1,0 2,0 L10,0 L13,3 L30,3 L30,27 L0,27Z" fill="#e8a820"/><rect x="0" y="5" width="30" height="22" rx="1" fill="#f8cc50"/><rect x="6" y="19" width="18" height="8" rx="2" fill="#1a7ad8"/><rect x="9" y="21" width="12" height="2" fill="#bde0ff"/></svg>
<div class="a" style="left:922px;top:1070px;width:8px;height:3px;border-radius:2px;background:#9a9a9a"></div>
<svg class="a" style="left:966px;top:1035px" width="30" height="30" viewBox="0 0 30 30"><circle cx="15" cy="15" r="14.5" fill="#fffc00"/><path d="M15,6 C19,6 20.5,9 20.5,12 L20.5,14 L22.5,14 C22,16 20,16.5 21,18 C22,19.5 23.5,20 23.5,20.5 C21,21.5 20,21.5 19.5,22.5 C17,22 16,23.5 15,23.5 C14,23.5 13,22 10.5,22.5 C10,21.5 9,21.5 6.5,20.5 C6.5,20 8,19.5 9,18 C10,16.5 8,16 7.5,14 L9.5,14 L9.5,12 C9.5,9 11,6 15,6Z" fill="#fff" stroke="#222" stroke-width="0.9"/></svg>
<svg class="a" style="left:1021px;top:1035px" width="30" height="30" viewBox="0 0 30 30"><path d="M1,8 L29,8 L29,27 C29,28.5 28,29.5 26.5,29.5 L3.5,29.5 C2,29.5 1,28.5 1,27Z" fill="#f4f4f4"/><path d="M9,8 L9,4 C9,1 21,1 21,4 L21,8" fill="none" stroke="#1aa0e8" stroke-width="2.2"/><rect x="9" y="12" width="5.5" height="5.5" fill="#f25022"/><rect x="15.5" y="12" width="5.5" height="5.5" fill="#7fba00"/><rect x="9" y="18.5" width="5.5" height="5.5" fill="#00a4ef"/><rect x="15.5" y="18.5" width="5.5" height="5.5" fill="#ffb900"/></svg>
<svg class="a" style="left:1076px;top:1036px" width="30" height="28" viewBox="0 0 30 28"><path d="M0,12 L15,1 L30,12 L30,27 L0,27Z" fill="#0f78d4"/><path d="M0,12 L15,22 L30,12 L30,27 L0,27Z" fill="#2aa0f0"/><path d="M4,10 L15,3 L26,10 L15,18Z" fill="#e6f4ff"/></svg>
<svg class="a" style="left:1131px;top:1035px" width="31" height="31" viewBox="0 0 31 31"><defs><linearGradient id="dg" x1="0" y1="0.5" x2="1" y2="0.5"><stop offset="0" stop-color="#e040c0"/><stop offset="0.5" stop-color="#ff1030"/><stop offset="1" stop-color="#ff9000"/></linearGradient></defs><path d="M15.5,1 L30,15.5 L15.5,30 L1,15.5Z" fill="url(#dg)"/></svg>
<svg class="a" style="left:1186px;top:1035px" width="30" height="30" viewBox="0 0 30 30"><defs><linearGradient id="eg" x1="0" y1="1" x2="1" y2="0"><stop offset="0" stop-color="#0c59a4"/><stop offset="0.5" stop-color="#1da1f2"/><stop offset="1" stop-color="#5fdc6c"/></linearGradient></defs><path d="M15,1 C23,1 29,7 29,14 C29,19 25,21 21,21 C17,21 15,19 16,17 C19,17 20,15 19,13 C17,9 12,9 9,12 C6,15 6,22 11,26 C14,28 19,29 23,27 C20,29.5 17,30 15,30 C7,30 1,23 1,15 C1,7 7,1 15,1Z" fill="url(#eg)"/></svg>
<svg class="a" style="left:1241px;top:1036px" width="30" height="30" viewBox="0 0 30 30"><circle cx="15" cy="15" r="14" fill="#dd3a2c"/><path d="M15,15 L27.1,22 A14,14 0 0,1 3,22.5Z" fill="#23a455"/><path d="M15,15 L27.1,22 A14,14 0 0,0 22,3Z" fill="#fcc934"/><path d="M15,15 L3,22.5 A14,14 0 0,1 2,12 L15,12Z" fill="#23a455"/><circle cx="15" cy="15" r="6" fill="#fff"/><circle cx="15" cy="15" r="4.6" fill="#4a8af4"/></svg>
<div class="a" style="left:1257px;top:1029px;width:19px;height:19px;border-radius:50%;background:#0c8ea0"></div>
<div class="t" style="left:1262px;top:1033px;font-size:11px;color:#e0f4f4;font-weight:bold">K</div>
<svg class="a" style="left:1296px;top:1036px" width="30" height="30" viewBox="0 0 30 30"><circle cx="16" cy="15" r="14" fill="#ed6c47"/><path d="M16,15 L16,1 A14,14 0 0,1 30,15Z" fill="#ff8f6b"/><path d="M16,15 L30,15 A14,14 0 0,1 16,29Z" fill="#d35230"/><rect x="0" y="7" width="16" height="16" rx="2" fill="#c43e1c"/><text x="3.5" y="20" font-family="Liberation Sans" font-weight="bold" font-size="12" fill="#fff">P</text></svg>
<svg class="a" style="left:1351px;top:1035px" width="31" height="31" viewBox="0 0 31 31"><path d="M15.5,2 A13.5,13.5 0 1,1 8,26 L1.5,28.5 L3.5,22 A13.5,13.5 0 0,1 15.5,2Z" fill="#fff"/><path d="M15.5,4 A11.5,11.5 0 1,1 8.5,24 L4.5,25.5 L5.5,21.5 A11.5,11.5 0 0,1 15.5,4Z" fill="#25d366"/><path d="M10,9 C9,10 9,13 12,17 C15,21 19,22 20.5,21 L21,19 L18.5,17.5 L17,18.5 C15,17.5 13.5,16 12.5,14 L13.5,12.5 L12,10 Z" fill="#fff"/></svg>
<div class="a" style="left:1365px;top:1029px;width:25px;height:19px;border-radius:10px;background:#f07a68"></div>
<div class="t" style="left:1368.5px;top:1032px;font-size:13px;color:#111">23</div>
<div class="a" style="left:1252px;top:1070px;width:8px;height:3px;border-radius:2px;background:#9a9a9a"></div>
<div class="a" style="left:1307px;top:1070px;width:8px;height:3px;border-radius:2px;background:#9a9a9a"></div>
<div class="a" style="left:1362px;top:1070px;width:8px;height:3px;border-radius:2px;background:#9a9a9a"></div>
<div class="a" style="left:1396px;top:1025px;width:50px;height:49px;border-radius:5px;background:#2c2c30"></div>
<svg class="a" style="left:1404px;top:1034px" width="30" height="30" viewBox="0 0 30 30"><path d="M2,6 L16,1 L28,6 L28,24 L14,29 L2,24Z" fill="#b01818"/><path d="M2,6 L14,11 L28,6 M14,11 L14,29" fill="none" stroke="#701010"/><text x="3" y="22" font-family="Liberation Sans" font-weight="bold" font-size="12" fill="#fff">SW</text></svg>
<div class="a" style="left:1413px;top:1072px;width:18px;height:3px;border-radius:2px;background:#f08060"></div>
<div class="a" style="left:1414px;top:1030px;width:506px;height:50px;background:rgba(8,8,8,0.78)"></div>
<div class="t" style="left:1637px;top:1034px;font-size:15px;color:#8e8e8e">ENG</div>
<div class="t" style="left:1646px;top:1052px;font-size:15px;color:#8e8e8e">IN</div>
<div class="t" style="left:1829px;top:1034px;font-size:15px;color:#8e8e8e">07:30</div>
<div class="t" style="left:1789px;top:1052px;font-size:15px;color:#8e8e8e">23-11-2025</div>
<svg class="a" style="left:1688px;top:1040px" width="22" height="20" viewBox="0 0 22 20"><rect x="1" y="1" width="16" height="12" fill="none" stroke="#8e8e8e" stroke-width="1.6"/><path d="M5,17 L14,17 M9.5,13 L9.5,17" stroke="#8e8e8e" stroke-width="1.6"/></svg>
<svg class="a" style="left:1718px;top:1040px" width="24" height="20" viewBox="0 0 24 20"><path d="M1,7 L5,7 L10,2 L10,18 L5,13 L1,13Z" fill="none" stroke="#8e8e8e" stroke-width="1.5"/><path d="M13,6 C15,8 15,12 13,14 M16,3 C20,7 20,13 16,17" fill="none" stroke="#8e8e8e" stroke-width="1.5"/></svg>
<svg class="a" style="left:1748px;top:1042px" width="24" height="16" viewBox="0 0 24 16"><rect x="1" y="3" width="18" height="10" rx="1.5" fill="#8e8e8e"/><rect x="19" y="6" width="2" height="4" fill="#8e8e8e"/></svg>
<svg class="a" style="left:1596px;top:1038px" width="18" height="22" viewBox="0 0 18 22"><rect x="1" y="4" width="14" height="14" rx="2" fill="#6b6fb0"/><text x="4" y="15" font-family="Liberation Sans" font-size="10" font-weight="bold" fill="#dde">T</text></svg>
<div class="a" style="left:1563px;top:1050px;width:11px;height:11px;border-radius:50%;background:#b8700f"></div>
<div class="a" style="left:1882px;top:1041px;width:24px;height:20px;border-radius:50%;background:#7a4a3a"></div>
<div class="t" style="left:1414px;top:1032.5px;font-size:43px;color:#fff;letter-spacing:0.2px;transform:scaleY(1.045);transform-origin:0 0">23-Mar-2026 01:52:53 PM</div>
<div class="a" style="left:1887px;top:180px;width:33px;height:210px;background:#d6d6d6;border:1px solid #a0a0a0;border-right:none"></div>
<div class="a" style="left:1888px;top:181px;width:32px;height:28px;background:#fafafa"></div>
<div class="a" style="left:1888px;top:209px;width:32px;height:1px;background:#a8a8a8"></div>
<div class="a" style="left:1888px;top:239px;width:32px;height:1px;background:#a8a8a8"></div>
<div class="a" style="left:1888px;top:269px;width:32px;height:1px;background:#a8a8a8"></div>
<div class="a" style="left:1888px;top:299px;width:32px;height:1px;background:#a8a8a8"></div>
<div class="a" style="left:1888px;top:329px;width:32px;height:1px;background:#a8a8a8"></div>
<div class="a" style="left:1888px;top:359px;width:32px;height:1px;background:#a8a8a8"></div>
<svg class="a" style="left:1894px;top:185px" width="20" height="20" viewBox="0 0 20 20"><defs><radialGradient id="sg" cx="0.4" cy="0.3" r="0.7"><stop offset="0" stop-color="#4a90c8"/><stop offset="1" stop-color="#0a3a6a"/></radialGradient></defs><circle cx="10" cy="10" r="9.5" fill="url(#sg)"/><path d="M8,6 L14,10 L8,14Z" fill="none" stroke="#cfe" stroke-width="1"/></svg>
<svg class="a" style="left:1895px;top:215px" width="18" height="17" viewBox="0 0 18 17"><path d="M1,8 L9,1 L17,8" fill="none" stroke="#1b5f8a" stroke-width="2"/><path d="M3,7.5 L3,16 L15,16 L15,7.5" fill="#fff" stroke="#222" stroke-width="1.1"/><rect x="7.5" y="10" width="4" height="6" fill="#fff" stroke="#222"/></svg>
<svg class="a" style="left:1896px;top:244px" width="16" height="18" viewBox="0 0 16 18"><path d="M1,5 L5,3 L5,16 L1,17Z M5,3 L9,1 L9,15 L5,16 M9,1 L14,2 L14,15 L9,15" fill="#fff" stroke="#222" stroke-width="1.1"/></svg>
<svg class="a" style="left:1894px;top:276px" width="20" height="16" viewBox="0 0 20 16"><path d="M1,2 L7,2 L8,4 L16,4 L16,7 L4,7 L1,15Z" fill="#ddd" stroke="#333"/><path d="M1,15 L4,7 L19,7 L16,15Z" fill="#f4f4f4" stroke="#333"/></svg>
<svg class="a" style="left:1895px;top:306px" width="18" height="17" viewBox="0 0 18 17"><rect x="0.5" y="0.5" width="17" height="16" rx="1" fill="#fff" stroke="#333"/><path d="M3,4 L10,4 L10,7 L7.5,7 L7.5,11 L10,11 L10,13 L3,13 L3,11 L5.5,11 L5.5,7 L3,7Z" fill="#f2c11a"/><rect x="12" y="4" width="3" height="3" fill="#f2c11a"/><rect x="12" y="9" width="3" height="5" fill="#ccc"/></svg>
<svg class="a" style="left:1896px;top:336px" width="17" height="17" viewBox="0 0 17 17"><circle cx="8.5" cy="8.5" r="8" fill="#3a9a3a"/><path d="M8.5,8.5 L8.5,0.5 A8,8 0 0,0 1,11Z" fill="#2c7fd8"/><path d="M8.5,8.5 L8.5,0.5 A8,8 0 0,1 16,11Z" fill="#e03030"/><path d="M8.5,8.5 L16,11 A8,8 0 0,1 5,16Z" fill="#f0c020"/></svg>
<svg class="a" style="left:1895px;top:366px" width="18" height="17" viewBox="0 0 18 17"><rect x="0.5" y="0.5" width="17" height="16" rx="1" fill="#fff" stroke="#1b4f7a"/><rect x="0.5" y="0.5" width="17" height="3" fill="#2c7fb8"/><rect x="2.5" y="6" width="4" height="2" fill="#2c7fb8"/><rect x="2.5" y="9.5" width="4" height="2" fill="#2c7fb8"/><rect x="2.5" y="13" width="4" height="2" fill="#2c7fb8"/><path d="M8,7 L15,7 M8,10.5 L15,10.5 M8,14 L15,14" stroke="#333"/></svg>
<svg class="a" style="left:318px;top:874px" width="56" height="70" viewBox="0 0 56 70"><path d="M10.3,35.2 L28,17" stroke="#7fd67f" stroke-width="3.5"/><path d="M22,20 L27,15 L31,14 L30,19 L25,23Z" fill="#1a6a1a"/><path d="M27,15 L31,13 L30,18Z" fill="#9ae09a"/><path d="M10.5,35 L34,46" stroke="#9a0000" stroke-width="3.5"/><path d="M27,41 L41,49.5 L27,50Z" fill="#9a0000"/><path d="M10.3,35 L11,56" stroke="#0000b0" stroke-width="4"/><path d="M6,54 L16,54 L11.5,63Z" fill="#0000b0"/><text x="31" y="11" font-family="Liberation Sans" font-size="10" fill="#1a8a1a">Y</text><text x="43" y="53" font-family="Liberation Sans" font-size="11" fill="#ff3030">X</text><text x="10" y="69" font-family="Liberation Sans" font-size="10" fill="#3030ff">Z</text></svg>

</body></html>
